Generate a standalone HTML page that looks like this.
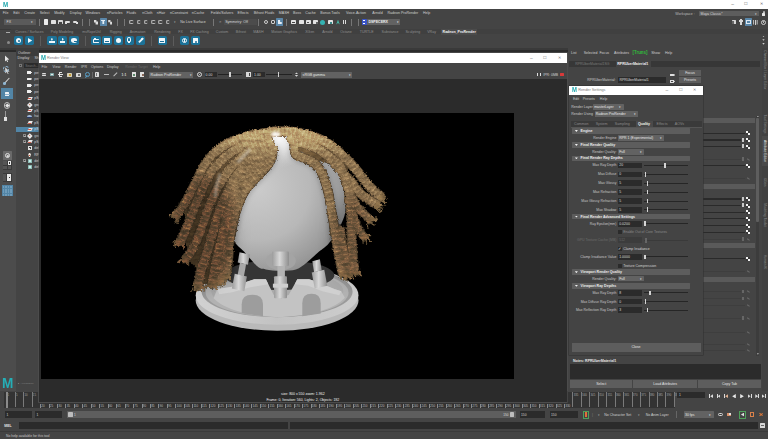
<!DOCTYPE html>
<html><head><meta charset="utf-8"><title>Maya - Render View</title>
<style>
html,body{margin:0;padding:0;background:#444;}
#app{position:relative;width:768px;height:439px;overflow:hidden;background:#444;font-family:"Liberation Sans",sans-serif;}
#app div,#app span,#app svg{position:absolute;}
#app span{white-space:nowrap;line-height:10px;height:10px;}
</style></head><body><div id="app"><div style="left:0.00px;top:0.00px;width:768.00px;height:9.40px;background:#ffffff;"></div><span style="left:2.80px;top:-0.30px;font-size:6.86px;font-weight:bold;color:#22a7ad;transform-origin:0 50%;transform:scaleX(0.9)">M</span><span style="left:732.60px;top:-0.70px;font-size:4.98px;color:#666;transform:translate(-50%,0);">–</span><span style="left:746.40px;top:-0.60px;font-size:4.15px;color:#666;transform:translate(-50%,0);">☐</span><span style="left:761.00px;top:-0.60px;font-size:4.15px;color:#666;transform:translate(-50%,0);">✕</span><div style="left:0.00px;top:9.40px;width:768.00px;height:7.00px;background:#444444;"></div><span style="left:5.50px;top:7.70px;font-size:3.57px;color:#cfcfcf;transform:translate(-50%,0);">File</span><span style="left:16.30px;top:7.70px;font-size:3.57px;color:#cfcfcf;transform:translate(-50%,0);">Edit</span><span style="left:29.60px;top:7.70px;font-size:3.57px;color:#cfcfcf;transform:translate(-50%,0);">Create</span><span style="left:44.60px;top:7.70px;font-size:3.57px;color:#cfcfcf;transform:translate(-50%,0);">Select</span><span style="left:59.40px;top:7.70px;font-size:3.57px;color:#cfcfcf;transform:translate(-50%,0);">Modify</span><span style="left:75.70px;top:7.70px;font-size:3.57px;color:#cfcfcf;transform:translate(-50%,0);">Display</span><span style="left:92.70px;top:7.70px;font-size:3.57px;color:#cfcfcf;transform:translate(-50%,0);">Windows</span><span style="left:114.80px;top:7.70px;font-size:3.57px;color:#cfcfcf;transform:translate(-50%,0);">nParticles</span><span style="left:131.30px;top:7.70px;font-size:3.57px;color:#cfcfcf;transform:translate(-50%,0);">Fluids</span><span style="left:147.40px;top:7.70px;font-size:3.57px;color:#cfcfcf;transform:translate(-50%,0);">nCloth</span><span style="left:161.00px;top:7.70px;font-size:3.57px;color:#cfcfcf;transform:translate(-50%,0);">nHair</span><span style="left:179.00px;top:7.70px;font-size:3.57px;color:#cfcfcf;transform:translate(-50%,0);">nConstraint</span><span style="left:198.00px;top:7.70px;font-size:3.57px;color:#cfcfcf;transform:translate(-50%,0);">nCache</span><span style="left:222.00px;top:7.70px;font-size:3.57px;color:#cfcfcf;transform:translate(-50%,0);">Fields/Solvers</span><span style="left:243.00px;top:7.70px;font-size:3.57px;color:#cfcfcf;transform:translate(-50%,0);">Effects</span><span style="left:264.00px;top:7.70px;font-size:3.57px;color:#cfcfcf;transform:translate(-50%,0);">Bifrost Fluids</span><span style="left:284.00px;top:7.70px;font-size:3.57px;color:#cfcfcf;transform:translate(-50%,0);">MASH</span><span style="left:297.00px;top:7.70px;font-size:3.57px;color:#cfcfcf;transform:translate(-50%,0);">Boss</span><span style="left:310.50px;top:7.70px;font-size:3.57px;color:#cfcfcf;transform:translate(-50%,0);">Cache</span><span style="left:330.00px;top:7.70px;font-size:3.57px;color:#cfcfcf;transform:translate(-50%,0);">Bonus Tools</span><span style="left:356.00px;top:7.70px;font-size:3.57px;color:#cfcfcf;transform:translate(-50%,0);">Voice-Action</span><span style="left:377.50px;top:7.70px;font-size:3.57px;color:#cfcfcf;transform:translate(-50%,0);">Arnold</span><span style="left:402.80px;top:7.70px;font-size:3.57px;color:#cfcfcf;transform:translate(-50%,0);">Radeon ProRender</span><span style="left:426.60px;top:7.70px;font-size:3.57px;color:#cfcfcf;transform:translate(-50%,0);">Help</span><span style="left:685.00px;top:8.60px;font-size:3.49px;color:#bdbdbd;transform:translate(-50%,0);">Workspace :</span><div style="left:698.50px;top:10.80px;width:60.50px;height:5.40px;background:#5d5d5d;border-radius:0.5px"></div><span style="left:700.50px;top:8.60px;font-size:3.49px;color:#d8d8d8;transform:none;">Maya Classic*</span><span style="left:755.50px;top:8.60px;font-size:3.32px;color:#ddd;transform:translate(-50%,0);">▾</span><div style="left:761.80px;top:12.60px;width:3.60px;height:3.40px;background:#e8e8e8;border-radius:0.5px"></div><div style="left:762.50px;top:10.90px;width:2.20px;height:2.60px;background:transparent;border:0.7px solid #e8e8e8;border-radius:1.2px 1.2px 0 0;box-sizing:border-box"></div><div style="left:0.00px;top:16.40px;width:768.00px;height:12.60px;background:#444444;"></div><div style="left:4.20px;top:19.20px;width:31.50px;height:6.00px;background:#5a5a5a;border-radius:0.6px"></div><span style="left:6.50px;top:17.20px;font-size:3.57px;color:#dcdcdc;transform:none;">FX</span><span style="left:32.30px;top:17.20px;font-size:3.49px;color:#e0e0e0;transform:translate(-50%,0);">▾</span><div style="left:39.05px;top:18.60px;width:0.60px;height:7.00px;background:#777;"></div><div style="left:82.45px;top:18.60px;width:0.60px;height:7.00px;background:#777;"></div><div style="left:88.75px;top:18.60px;width:0.60px;height:7.00px;background:#777;"></div><div style="left:117.05px;top:18.60px;width:0.60px;height:7.00px;background:#777;"></div><div style="left:124.35px;top:18.60px;width:0.60px;height:7.00px;background:#777;"></div><div style="left:213.05px;top:18.60px;width:0.60px;height:7.00px;background:#777;"></div><div style="left:258.15px;top:18.60px;width:0.60px;height:7.00px;background:#777;"></div><div style="left:286.45px;top:18.60px;width:0.60px;height:7.00px;background:#777;"></div><div style="left:350.65px;top:18.60px;width:0.60px;height:7.00px;background:#777;"></div><div style="left:358.45px;top:18.60px;width:0.60px;height:7.00px;background:#777;"></div><div style="left:44.10px;top:19.40px;width:3.60px;height:5.20px;background:#ececec;border-radius:0.4px"></div><div style="left:50.90px;top:20.30px;width:5.00px;height:4.00px;background:#e2e2e2;border-radius:0.4px"></div><div style="left:58.10px;top:19.90px;width:4.60px;height:4.60px;background:#d8d8d8;border-radius:0.4px"></div><div style="left:59.20px;top:22.00px;width:2.40px;height:2.40px;background:#444;"></div><div style="left:65.40px;top:21.20px;width:4.60px;height:1.60px;background:#e0e0e0;border-radius:1px"></div><div style="left:65.40px;top:22.10px;width:1.20px;height:2.20px;background:#e0e0e0;"></div><div style="left:72.90px;top:21.20px;width:4.60px;height:1.60px;background:#e0e0e0;border-radius:1px"></div><div style="left:76.40px;top:22.10px;width:1.20px;height:2.20px;background:#e0e0e0;"></div><div style="left:93.90px;top:19.50px;width:4.20px;height:5.00px;background:#dcdcdc;clip-path:polygon(0 0,60% 0,60% 40%,100% 40%,100% 100%,40% 100%,40% 60%,0 60%)"></div><div style="left:99.60px;top:18.40px;width:7.40px;height:7.40px;background:#5a86a8;border-radius:0.5px"></div><div style="left:101.10px;top:19.70px;width:4.40px;height:4.60px;background:#e6eef5;clip-path:polygon(0 0,100% 0,100% 30%,70% 30%,70% 100%,30% 100%,30% 30%,0 30%)"></div><div style="left:108.20px;top:19.50px;width:4.20px;height:5.00px;background:#dcdcdc;clip-path:polygon(0 0,55% 0,55% 45%,100% 45%,100% 100%,45% 100%,45% 55%,0 55%)"></div><div style="left:129.20px;top:19.60px;width:4.80px;height:4.80px;background:transparent;border:0.9px solid #b9b9b9;border-radius:50%;box-sizing:border-box;border-right-color:#555"></div><div style="left:136.60px;top:19.60px;width:4.80px;height:4.80px;background:transparent;border:0.9px solid #b9b9b9;border-radius:50%;box-sizing:border-box;border-right-color:#555"></div><div style="left:143.60px;top:19.60px;width:4.80px;height:4.80px;background:transparent;border:0.9px solid #b9b9b9;border-radius:50%;box-sizing:border-box;border-right-color:#555"></div><div style="left:151.00px;top:19.60px;width:4.80px;height:4.80px;background:transparent;border:0.9px solid #b9b9b9;border-radius:50%;box-sizing:border-box;border-right-color:#555"></div><div style="left:158.00px;top:19.60px;width:4.80px;height:4.80px;background:transparent;border:0.9px solid #b9b9b9;border-radius:50%;box-sizing:border-box;border-right-color:#555"></div><div style="left:165.60px;top:19.60px;width:4.80px;height:4.80px;background:transparent;border:0.9px solid #b9b9b9;border-radius:50%;box-sizing:border-box;border-right-color:#555"></div><span style="left:174.70px;top:17.30px;font-size:2.82px;color:#aaa;transform:translate(-50%,0);">▾</span><span style="left:180.30px;top:17.20px;font-size:3.57px;color:#d4d4d4;transform:none;">No Live Surface</span><span style="left:220.00px;top:17.20px;font-size:2.99px;color:#aaa;transform:translate(-50%,0);">✕</span><div style="left:223.50px;top:19.20px;width:33.00px;height:6.00px;background:#4c4c4c;border-radius:0.5px"></div><span style="left:225.20px;top:17.20px;font-size:3.57px;color:#d8d8d8;transform:none;">Symmetry: Off</span><div style="left:263.80px;top:19.80px;width:4.40px;height:4.40px;background:transparent;border:0.8px solid #cfcfcf;border-radius:50%;box-sizing:border-box"></div><div style="left:270.50px;top:19.80px;width:4.40px;height:4.40px;background:transparent;border:0.8px solid #cfcfcf;border-radius:1px;box-sizing:border-box"></div><div style="left:276.00px;top:18.40px;width:7.40px;height:7.40px;background:#5a86a8;border-radius:0.5px"></div><div style="left:277.60px;top:19.70px;width:4.20px;height:4.60px;background:#e6eef5;clip-path:polygon(0 0,60% 0,60% 50%,100% 50%,100% 100%,0 100%)"></div><div style="left:291.00px;top:20.00px;width:5.00px;height:4.20px;background:#e4e4e4;border-radius:0.4px"></div><div style="left:298.50px;top:20.00px;width:5.00px;height:4.20px;background:#e4e4e4;border-radius:0.4px"></div><div style="left:305.50px;top:20.00px;width:5.00px;height:4.20px;background:#e4e4e4;border-radius:0.4px"></div><div style="left:313.10px;top:20.00px;width:5.00px;height:4.20px;background:#e4e4e4;border-radius:0.4px"></div><div style="left:292.40px;top:21.60px;width:2.20px;height:1.60px;background:#444;"></div><div style="left:306.90px;top:21.60px;width:2.20px;height:1.60px;background:#555;"></div><div style="left:315.60px;top:21.60px;width:2.00px;height:2.00px;background:#666;"></div><div style="left:320.30px;top:19.50px;width:5.00px;height:5.00px;background:#35b3b3;border-radius:50%"></div><div style="left:327.80px;top:20.00px;width:5.00px;height:4.20px;background:#e4e4e4;border-radius:0.4px"></div><div style="left:330.30px;top:21.50px;width:2.00px;height:2.00px;background:#3a8a8a;"></div><div style="left:336.20px;top:19.50px;width:3.60px;height:5.00px;background:#46b5a5;clip-path:polygon(50% 0,100% 100%,50% 70%,0 100%)"></div><div style="left:343.10px;top:19.70px;width:1.00px;height:4.60px;background:#ddd;"></div><div style="left:345.10px;top:19.70px;width:1.00px;height:4.60px;background:#ddd;"></div><div style="left:361.50px;top:18.80px;width:5.40px;height:6.60px;background:#3b55c8;border-radius:0.6px"></div><div style="left:362.90px;top:20.10px;width:2.60px;height:1.00px;background:#fff;"></div><div style="left:362.90px;top:22.90px;width:2.60px;height:1.00px;background:#fff;"></div><div style="left:367.40px;top:19.20px;width:33.00px;height:6.00px;background:#626262;border-radius:0.5px"></div><span style="left:368.40px;top:17.20px;font-size:3.57px;color:#f0f0f0;transform:none;font-weight:bold">DSPECERX</span><span style="left:397.80px;top:17.20px;font-size:3.49px;color:#f0f0f0;transform:translate(-50%,0);">▾</span><div style="left:731.60px;top:19.70px;width:4.60px;height:4.60px;background:#d8d8d8;border-radius:0.5px"></div><div style="left:732.20px;top:20.50px;width:1.40px;height:3.00px;background:#666;"></div><div style="left:740.20px;top:19.30px;width:1.40px;height:5.40px;background:#d8d8d8;"></div><div style="left:739.20px;top:20.40px;width:3.40px;height:1.20px;background:#d8d8d8;"></div><div style="left:744.70px;top:18.40px;width:7.40px;height:7.40px;background:#5a86a8;border-radius:0.5px"></div><div style="left:746.10px;top:20.30px;width:4.60px;height:3.40px;background:#dfe9f2;"></div><div style="left:747.00px;top:21.20px;width:2.80px;height:1.60px;background:#5a86a8;"></div><div style="left:753.20px;top:19.50px;width:4.40px;height:5.00px;background:#cfcfcf;clip-path:polygon(0 0,20% 0,20% 100%,0 100%,0 0,80% 0,100% 0,100% 100%,80% 100%,80% 0)"></div><div style="left:754.95px;top:19.50px;width:0.90px;height:5.00px;background:#cfcfcf;"></div><div style="left:761.00px;top:19.60px;width:5.00px;height:5.00px;background:transparent;border:0.9px solid #cfcfcf;border-radius:50%;box-sizing:border-box"></div><div style="left:762.70px;top:21.30px;width:1.60px;height:1.60px;background:#cfcfcf;border-radius:50%"></div><div style="left:0.00px;top:29.00px;width:768.00px;height:19.40px;background:#444444;"></div><div style="left:0.00px;top:29.00px;width:768.00px;height:0.50px;background:#3a3a3a;"></div><div style="left:10.50px;top:29.40px;width:757.50px;height:5.00px;background:#404040;"></div><span style="left:29.30px;top:26.80px;font-size:3.57px;color:#8f8f8f;transform:translate(-50%,0);">Curves / Surfaces</span><span style="left:62.00px;top:26.80px;font-size:3.57px;color:#8f8f8f;transform:translate(-50%,0);">Poly Modeling</span><span style="left:91.50px;top:26.80px;font-size:3.57px;color:#8f8f8f;transform:translate(-50%,0);">mvRopeUtil</span><span style="left:115.80px;top:26.80px;font-size:3.57px;color:#8f8f8f;transform:translate(-50%,0);">Rigging</span><span style="left:137.60px;top:26.80px;font-size:3.57px;color:#8f8f8f;transform:translate(-50%,0);">Animation</span><span style="left:162.40px;top:26.80px;font-size:3.57px;color:#8f8f8f;transform:translate(-50%,0);">Rendering</span><span style="left:180.50px;top:26.80px;font-size:3.57px;color:#8f8f8f;transform:translate(-50%,0);">FX</span><span style="left:199.50px;top:26.80px;font-size:3.57px;color:#8f8f8f;transform:translate(-50%,0);">FX Caching</span><span style="left:222.00px;top:26.80px;font-size:3.57px;color:#8f8f8f;transform:translate(-50%,0);">Custom</span><span style="left:240.90px;top:26.80px;font-size:3.57px;color:#8f8f8f;transform:translate(-50%,0);">Bifrost</span><span style="left:258.40px;top:26.80px;font-size:3.57px;color:#8f8f8f;transform:translate(-50%,0);">MASH</span><span style="left:284.20px;top:26.80px;font-size:3.57px;color:#8f8f8f;transform:translate(-50%,0);">Motion Graphics</span><span style="left:309.80px;top:26.80px;font-size:3.57px;color:#8f8f8f;transform:translate(-50%,0);">XGen</span><span style="left:327.30px;top:26.80px;font-size:3.57px;color:#8f8f8f;transform:translate(-50%,0);">Arnold</span><span style="left:346.00px;top:26.80px;font-size:3.57px;color:#8f8f8f;transform:translate(-50%,0);">Octane</span><span style="left:366.70px;top:26.80px;font-size:3.57px;color:#8f8f8f;transform:translate(-50%,0);">TURTLE</span><span style="left:390.00px;top:26.80px;font-size:3.57px;color:#8f8f8f;transform:translate(-50%,0);">Substance</span><span style="left:412.80px;top:26.80px;font-size:3.57px;color:#8f8f8f;transform:translate(-50%,0);">Sculpting</span><span style="left:431.60px;top:26.80px;font-size:3.57px;color:#8f8f8f;transform:translate(-50%,0);">VRay</span><div style="left:441.00px;top:29.40px;width:36.00px;height:5.20px;background:#4b4b4b;"></div><span style="left:459.20px;top:26.80px;font-size:3.57px;color:#f2f2f2;transform:translate(-50%,0);font-weight:bold">Radeon_ProRender</span><div style="left:6.40px;top:31.50px;width:3.20px;height:1.00px;background:#aaa;"></div><div style="left:6.50px;top:40.50px;width:3.00px;height:3.00px;background:#8a8a8a;border-radius:50%"></div><div style="left:762.30px;top:35.50px;width:2.40px;height:1.60px;background:#cfcfcf;clip-path:polygon(0 0,100% 0,50% 100%)"></div><div style="left:762.30px;top:39.20px;width:2.40px;height:1.60px;background:#cfcfcf;clip-path:polygon(0 0,100% 0,50% 100%)"></div><div style="left:762.30px;top:43.10px;width:2.40px;height:1.60px;background:#cfcfcf;clip-path:polygon(0 0,100% 0,50% 100%)"></div><div style="left:40.35px;top:36.00px;width:0.60px;height:10.00px;background:#5c5c5c;"></div><div style="left:84.95px;top:36.00px;width:0.60px;height:10.00px;background:#5c5c5c;"></div><div style="left:151.35px;top:36.00px;width:0.60px;height:10.00px;background:#5c5c5c;"></div><div style="left:172.75px;top:36.00px;width:0.60px;height:10.00px;background:#5c5c5c;"></div><div style="left:14.10px;top:35.80px;width:9.40px;height:9.40px;background:#1c7298;border-radius:1.7px"></div><div style="left:16.20px;top:37.90px;width:5.20px;height:5.20px;background:#f2f7fa;border-radius:50%"></div><div style="left:17.80px;top:39.50px;width:2.00px;height:2.00px;background:#1b6f9a;border-radius:50%"></div><div style="left:24.90px;top:35.80px;width:9.40px;height:9.40px;background:#1c7298;border-radius:1.7px"></div><div style="left:27.60px;top:37.70px;width:4.60px;height:5.60px;background:#f2f7fa;clip-path:polygon(0 0,100% 50%,0 100%)"></div><div style="left:47.20px;top:35.80px;width:9.40px;height:9.40px;background:#1c7298;border-radius:1.7px"></div><div style="left:50.70px;top:37.70px;width:2.40px;height:3.00px;background:#f2f7fa;clip-path:polygon(30% 0,70% 0,70% 50%,100% 50%,50% 100%,0 50%,30% 50%)"></div><div style="left:49.10px;top:41.40px;width:5.60px;height:1.80px;background:#f2f7fa;"></div><div style="left:58.00px;top:35.80px;width:9.40px;height:9.40px;background:#1c7298;border-radius:1.7px"></div><div style="left:61.50px;top:37.70px;width:2.40px;height:3.00px;background:#f2f7fa;clip-path:polygon(30% 0,70% 0,70% 50%,100% 50%,50% 100%,0 50%,30% 50%)"></div><div style="left:59.90px;top:41.40px;width:5.60px;height:1.80px;background:#f2f7fa;"></div><div style="left:69.20px;top:35.80px;width:9.40px;height:9.40px;background:#1c7298;border-radius:1.7px"></div><div style="left:71.10px;top:38.00px;width:5.60px;height:4.60px;background:#f2f7fa;border-radius:50% 50% 40% 60%"></div><div style="left:74.40px;top:40.50px;width:2.20px;height:1.00px;background:#1b6f9a;"></div><div style="left:91.30px;top:35.80px;width:9.40px;height:9.40px;background:#1c7298;border-radius:1.7px"></div><div style="left:93.20px;top:39.10px;width:5.60px;height:3.60px;background:#f2f7fa;border-radius:0.4px"></div><div style="left:93.50px;top:38.20px;width:2.60px;height:1.20px;background:#f2f7fa;"></div><div style="left:94.20px;top:40.10px;width:4.40px;height:2.20px;background:#1b6f9a;"></div><div style="left:102.30px;top:35.80px;width:9.40px;height:9.40px;background:#1c7298;border-radius:1.7px"></div><div style="left:104.00px;top:38.20px;width:6.00px;height:4.60px;background:#f2f7fa;border-radius:0.3px"></div><div style="left:104.90px;top:40.50px;width:4.20px;height:1.60px;background:#1b6f9a;"></div><div style="left:113.60px;top:35.80px;width:9.40px;height:9.40px;background:#1c7298;border-radius:1.7px"></div><div style="left:115.80px;top:38.00px;width:5.00px;height:5.00px;background:#f2f7fa;border-radius:50%"></div><div style="left:124.60px;top:35.80px;width:9.40px;height:9.40px;background:#1c7298;border-radius:1.7px"></div><div style="left:127.40px;top:37.40px;width:3.80px;height:4.20px;background:transparent;border:0.9px solid #f2f7fa;border-radius:50% 50% 30% 30%;box-sizing:border-box"></div><div style="left:128.30px;top:42.10px;width:2.00px;height:1.40px;background:#f2f7fa;"></div><div style="left:135.70px;top:35.80px;width:9.40px;height:9.40px;background:#1c7298;border-radius:1.7px"></div><div style="left:139.65px;top:37.30px;width:1.50px;height:6.40px;background:#f2f7fa;transform:rotate(45deg)"></div><div style="left:140.80px;top:37.60px;width:2.60px;height:2.60px;background:#f2f7fa;border-radius:50%"></div><div style="left:157.70px;top:35.80px;width:9.40px;height:9.40px;background:#1c7298;border-radius:1.7px"></div><div style="left:159.40px;top:38.20px;width:6.00px;height:4.60px;background:#f2f7fa;border-radius:0.3px"></div><div style="left:160.30px;top:40.50px;width:4.20px;height:1.60px;background:#1b6f9a;"></div><div style="left:179.80px;top:35.80px;width:9.40px;height:9.40px;background:#1c7298;border-radius:1.7px"></div><div style="left:181.80px;top:37.80px;width:5.40px;height:5.40px;background:transparent;border:1px solid #f2f7fa;border-radius:50%;box-sizing:border-box"></div><div style="left:184.00px;top:39.20px;width:1.00px;height:2.60px;background:#f2f7fa;"></div><div style="left:191.10px;top:35.80px;width:9.40px;height:9.40px;background:#1c7298;border-radius:1.7px"></div><div style="left:193.20px;top:37.70px;width:4.40px;height:5.60px;background:#f2f7fa;border-radius:0.3px"></div><div style="left:195.40px;top:40.60px;width:2.00px;height:2.00px;background:#1b6f9a;border-radius:50%"></div><div style="left:0.00px;top:48.40px;width:768.00px;height:5.00px;background:#3a3a3a;"></div><div style="left:0.00px;top:49.60px;width:768.00px;height:2.00px;background:#2b2b2b;"></div><div style="left:0.00px;top:51.60px;width:15.60px;height:340.00px;background:#4c4c4c;"></div><div style="left:15.60px;top:51.60px;width:0.60px;height:340.00px;background:#383838;"></div><div style="left:4.70px;top:55.20px;width:4.60px;height:7.00px;background:#e6e6e6;clip-path:polygon(0 0,100% 62%,55% 66%,78% 100%,58% 100%,38% 72%,0 92%)"></div><div style="left:5.20px;top:67.30px;width:4.40px;height:6.60px;background:#d6d6d6;clip-path:polygon(0 0,100% 62%,55% 66%,78% 100%,58% 100%,38% 72%,0 92%)"></div><div style="left:3.40px;top:66.20px;width:6.00px;height:6.00px;background:transparent;border:0.7px dashed #8fb4d0;border-radius:50%;box-sizing:border-box"></div><div style="left:6.35px;top:77.00px;width:1.30px;height:8.40px;background:#d8d8d8;transform:rotate(42deg)"></div><div style="left:3.40px;top:82.40px;width:2.40px;height:2.40px;background:#8fb4d0;border-radius:50%"></div><div style="left:1.40px;top:87.70px;width:11.60px;height:11.60px;background:#5285a6;"></div><div style="left:4.70px;top:91.50px;width:4.60px;height:4.20px;background:#eef3f7;border-radius:0.5px"></div><div style="left:5.30px;top:93.50px;width:4.60px;height:1.00px;background:#8fb4d0;"></div><div style="left:4.00px;top:102.40px;width:6.40px;height:6.40px;background:transparent;border:0.8px solid #bdbdbd;border-radius:50%;box-sizing:border-box"></div><div style="left:5.90px;top:104.30px;width:2.60px;height:2.60px;background:#e8e8e8;transform:rotate(45deg)"></div><div style="left:3.50px;top:116.90px;width:3.40px;height:3.80px;background:#e0e0e0;"></div><div style="left:4.90px;top:110.60px;width:0.60px;height:6.00px;background:#999;"></div><span style="left:7.40px;top:142.60px;font-size:2.49px;color:#888;transform:translate(-50%,0);">············</span><div style="left:2.60px;top:150.90px;width:9.40px;height:9.40px;background:#6a6a6a;border-radius:0.5px"></div><div style="left:4.80px;top:153.10px;width:5.00px;height:5.00px;background:transparent;border:0.8px solid #e0e0e0;border-radius:50%;box-sizing:border-box"></div><div style="left:6.50px;top:154.80px;width:1.60px;height:1.60px;background:#e0e0e0;transform:rotate(45deg)"></div><div style="left:2.80px;top:161.00px;width:9.00px;height:8.60px;background:#3a3a3a;"></div><div style="left:3.30px;top:161.30px;width:3.40px;height:3.40px;background:#555;"></div><div style="left:7.90px;top:161.30px;width:3.40px;height:3.40px;background:#e8e8e8;"></div><div style="left:3.30px;top:165.70px;width:3.40px;height:3.40px;background:#555;"></div><div style="left:7.90px;top:165.70px;width:3.40px;height:3.40px;background:#555;"></div><div style="left:8.70px;top:162.10px;width:1.80px;height:1.80px;background:#333;"></div><div style="left:2.80px;top:173.40px;width:9.00px;height:8.80px;background:#3a3a3a;"></div><div style="left:3.20px;top:174.10px;width:2.80px;height:7.40px;background:#555;"></div><div style="left:7.30px;top:174.10px;width:4.20px;height:7.40px;background:#e8e8e8;"></div><div style="left:8.50px;top:176.70px;width:1.80px;height:1.80px;background:#333;"></div><div style="left:1.80px;top:185.40px;width:11.00px;height:11.00px;background:#5285a6;"></div><div style="left:2.80px;top:186.40px;width:1.70px;height:1.70px;background:#6f9cba;"></div><div style="left:2.80px;top:188.90px;width:1.70px;height:1.70px;background:#6f9cba;"></div><div style="left:2.80px;top:191.40px;width:1.70px;height:1.70px;background:#6f9cba;"></div><div style="left:2.80px;top:193.90px;width:1.70px;height:1.70px;background:#6f9cba;"></div><div style="left:5.30px;top:186.40px;width:1.70px;height:1.70px;background:#6f9cba;"></div><div style="left:5.30px;top:188.90px;width:1.70px;height:1.70px;background:#6f9cba;"></div><div style="left:5.30px;top:191.40px;width:1.70px;height:1.70px;background:#6f9cba;"></div><div style="left:5.30px;top:193.90px;width:1.70px;height:1.70px;background:#6f9cba;"></div><div style="left:7.80px;top:186.40px;width:1.70px;height:1.70px;background:#6f9cba;"></div><div style="left:7.80px;top:188.90px;width:1.70px;height:1.70px;background:#6f9cba;"></div><div style="left:7.80px;top:191.40px;width:1.70px;height:1.70px;background:#6f9cba;"></div><div style="left:7.80px;top:193.90px;width:1.70px;height:1.70px;background:#6f9cba;"></div><div style="left:10.30px;top:186.40px;width:1.70px;height:1.70px;background:#6f9cba;"></div><div style="left:10.30px;top:188.90px;width:1.70px;height:1.70px;background:#6f9cba;"></div><div style="left:10.30px;top:191.40px;width:1.70px;height:1.70px;background:#6f9cba;"></div><div style="left:10.30px;top:193.90px;width:1.70px;height:1.70px;background:#6f9cba;"></div><div style="left:16.20px;top:48.40px;width:23.00px;height:343.00px;background:#444444;"></div><div style="left:16.20px;top:48.40px;width:23.00px;height:7.40px;background:#3c3c3c;"></div><span style="left:18.00px;top:47.70px;font-size:3.57px;color:#d4d4d4;transform:none;">Outliner</span><span style="left:17.60px;top:53.40px;font-size:3.57px;color:#cfcfcf;transform:none;">Display</span><span style="left:34.40px;top:53.40px;font-size:3.57px;color:#cfcfcf;transform:none;">Show</span><div style="left:18.60px;top:63.60px;width:3.60px;height:3.80px;background:#3a3a3a;border:0.5px solid #777;box-sizing:border-box"></div><div style="left:24.40px;top:63.20px;width:15.00px;height:5.20px;background:#2b2b2b;"></div><span style="left:25.20px;top:60.90px;font-size:3.32px;color:#777;transform:none;">Search...</span><div style="left:16.30px;top:126.60px;width:23.00px;height:5.60px;background:#5285a6;"></div><div style="left:27.30px;top:71.30px;width:3.40px;height:2.60px;background:#f0f0f0;border-radius:0.3px"></div><div style="left:30.70px;top:71.70px;width:1.40px;height:1.80px;background:#f0f0f0;clip-path:polygon(0 50%,100% 0,100% 100%)"></div><span style="left:34.20px;top:67.60px;font-size:3.49px;color:#d0d0d0;transform:none;">persp</span><div style="left:27.30px;top:77.60px;width:3.40px;height:2.60px;background:#f0f0f0;border-radius:0.3px"></div><div style="left:30.70px;top:78.00px;width:1.40px;height:1.80px;background:#f0f0f0;clip-path:polygon(0 50%,100% 0,100% 100%)"></div><span style="left:34.20px;top:73.90px;font-size:3.49px;color:#d0d0d0;transform:none;">persp</span><div style="left:27.30px;top:84.00px;width:3.40px;height:2.60px;background:#f0f0f0;border-radius:0.3px"></div><div style="left:30.70px;top:84.40px;width:1.40px;height:1.80px;background:#f0f0f0;clip-path:polygon(0 50%,100% 0,100% 100%)"></div><span style="left:34.20px;top:80.30px;font-size:3.49px;color:#d0d0d0;transform:none;">persp</span><div style="left:27.30px;top:90.30px;width:3.40px;height:2.60px;background:#f0f0f0;border-radius:0.3px"></div><div style="left:30.70px;top:90.70px;width:1.40px;height:1.80px;background:#f0f0f0;clip-path:polygon(0 50%,100% 0,100% 100%)"></div><span style="left:34.20px;top:86.60px;font-size:3.49px;color:#d0d0d0;transform:none;">persp</span><div style="left:27.50px;top:96.70px;width:4.20px;height:3.40px;background:#e9e9e9;transform:skewX(-25deg)"></div><div style="left:28.30px;top:98.30px;width:3.40px;height:1.40px;background:#d05848;transform:skewX(-25deg)"></div><span style="left:34.20px;top:93.40px;font-size:3.49px;color:#d0d0d0;transform:none;">pSph</span><div style="left:27.80px;top:102.70px;width:3.60px;height:3.60px;background:#e9e9e9;transform:rotate(45deg)"></div><div style="left:28.90px;top:103.80px;width:1.40px;height:1.40px;background:#c86a50;transform:rotate(45deg)"></div><span style="left:34.20px;top:99.50px;font-size:3.49px;color:#d0d0d0;transform:none;">grou</span><div style="left:27.50px;top:108.80px;width:4.20px;height:3.40px;background:#e9e9e9;transform:skewX(-25deg)"></div><div style="left:28.30px;top:110.40px;width:3.40px;height:1.40px;background:#d05848;transform:skewX(-25deg)"></div><span style="left:34.20px;top:105.50px;font-size:3.49px;color:#d0d0d0;transform:none;">pSph</span><div style="left:27.30px;top:114.50px;width:4.60px;height:3.80px;background:#9fb6d6;border-radius:50% 50% 20% 20%"></div><div style="left:27.40px;top:116.50px;width:4.40px;height:1.20px;background:#2a3a66;"></div><span style="left:34.20px;top:111.30px;font-size:3.49px;color:#d0d0d0;transform:none;">hair</span><div style="left:27.50px;top:120.90px;width:4.20px;height:3.40px;background:#e9e9e9;transform:skewX(-25deg)"></div><div style="left:28.30px;top:122.50px;width:3.40px;height:1.40px;background:#d05848;transform:skewX(-25deg)"></div><span style="left:34.20px;top:117.60px;font-size:3.49px;color:#d0d0d0;transform:none;">pSph</span><div style="left:27.50px;top:127.60px;width:4.20px;height:3.40px;background:#e9e9e9;transform:skewX(-25deg)"></div><div style="left:28.30px;top:129.20px;width:3.40px;height:1.40px;background:#d05848;transform:skewX(-25deg)"></div><span style="left:34.20px;top:124.30px;font-size:3.49px;color:#d0d0d0;transform:none;">pSph</span><div style="left:27.80px;top:134.10px;width:3.60px;height:3.60px;background:#e9e9e9;transform:rotate(45deg)"></div><div style="left:28.90px;top:135.20px;width:1.40px;height:1.40px;background:#c86a50;transform:rotate(45deg)"></div><span style="left:34.20px;top:130.90px;font-size:3.49px;color:#d0d0d0;transform:none;">grou</span><div style="left:27.50px;top:140.20px;width:4.20px;height:3.40px;background:#e9e9e9;transform:skewX(-25deg)"></div><div style="left:28.30px;top:141.80px;width:3.40px;height:1.40px;background:#d05848;transform:skewX(-25deg)"></div><span style="left:34.20px;top:136.90px;font-size:3.49px;color:#d0d0d0;transform:none;">pSph</span><div style="left:27.60px;top:146.40px;width:4.00px;height:4.00px;background:transparent;border:0.7px solid #e0e0e0;box-sizing:border-box"></div><div style="left:28.80px;top:147.60px;width:1.60px;height:1.60px;background:#e0e0e0;"></div><span style="left:34.20px;top:143.40px;font-size:3.49px;color:#d0d0d0;transform:none;">defa</span><div style="left:28.20px;top:152.50px;width:2.80px;height:4.40px;background:#f0e8e0;clip-path:polygon(50% 0,100% 40%,70% 100%,30% 100%,0 40%)"></div><div style="left:29.00px;top:154.50px;width:1.20px;height:1.60px;background:#d0583a;"></div><span style="left:34.20px;top:149.70px;font-size:3.49px;color:#d0d0d0;transform:none;">RPR</span><div style="left:27.60px;top:158.90px;width:4.00px;height:4.00px;background:#8fbdb5;border-radius:0.5px"></div><div style="left:28.60px;top:159.90px;width:2.00px;height:2.00px;background:#dff;border-radius:50%"></div><span style="left:34.20px;top:155.90px;font-size:3.49px;color:#d0d0d0;transform:none;">defa</span><div style="left:27.60px;top:165.20px;width:4.00px;height:4.00px;background:#8fbdb5;border-radius:0.5px"></div><div style="left:28.60px;top:166.20px;width:2.00px;height:2.00px;background:#dff;border-radius:50%"></div><span style="left:34.20px;top:162.20px;font-size:3.49px;color:#d0d0d0;transform:none;">defa</span><div style="left:23.40px;top:134.40px;width:3.00px;height:3.00px;background:transparent;border:0.5px solid #8a8a8a;box-sizing:border-box"></div><div style="left:24.10px;top:135.65px;width:1.60px;height:0.50px;background:#aaa;"></div><div style="left:23.40px;top:140.40px;width:3.00px;height:3.00px;background:transparent;border:0.5px solid #8a8a8a;box-sizing:border-box"></div><div style="left:24.10px;top:141.65px;width:1.60px;height:0.50px;background:#aaa;"></div><div style="left:23.40px;top:159.40px;width:3.00px;height:3.00px;background:transparent;border:0.5px solid #8a8a8a;box-sizing:border-box"></div><div style="left:24.10px;top:160.65px;width:1.60px;height:0.50px;background:#aaa;"></div><div style="left:38.60px;top:53.30px;width:528.60px;height:349.20px;background:#2b2b2b;box-shadow:0 0 0 0.5px #555"></div><div style="left:38.60px;top:53.30px;width:528.60px;height:9.30px;background:#ffffff;"></div><span style="left:40.80px;top:52.90px;font-size:6.58px;font-weight:bold;color:#22a7ad;transform-origin:0 50%;transform:scaleX(0.9)">M</span><span style="left:46.90px;top:53.10px;font-size:3.82px;color:#7d7d7d;transform:none;">Render View</span><span style="left:531.40px;top:52.60px;font-size:4.98px;color:#777;transform:translate(-50%,0);">–</span><span style="left:545.00px;top:52.90px;font-size:4.15px;color:#777;transform:translate(-50%,0);">☐</span><span style="left:559.40px;top:52.90px;font-size:4.15px;color:#777;transform:translate(-50%,0);">✕</span><div style="left:38.60px;top:62.60px;width:528.60px;height:16.40px;background:#444444;"></div><span style="left:44.40px;top:61.90px;font-size:3.57px;color:#c8c8c8;transform:translate(-50%,0);">File</span><span style="left:56.40px;top:61.90px;font-size:3.57px;color:#c8c8c8;transform:translate(-50%,0);">View</span><span style="left:70.70px;top:61.90px;font-size:3.57px;color:#c8c8c8;transform:translate(-50%,0);">Render</span><span style="left:84.00px;top:61.90px;font-size:3.57px;color:#c8c8c8;transform:translate(-50%,0);">IPR</span><span style="left:97.20px;top:61.90px;font-size:3.57px;color:#c8c8c8;transform:translate(-50%,0);">Options</span><span style="left:112.80px;top:61.90px;font-size:3.57px;color:#c8c8c8;transform:translate(-50%,0);">Display</span><span style="left:136.60px;top:61.90px;font-size:3.57px;color:#6a6a6a;transform:translate(-50%,0);">Render Target</span><span style="left:156.60px;top:61.90px;font-size:3.57px;color:#c8c8c8;transform:translate(-50%,0);">Help</span><div style="left:41.50px;top:72.80px;width:4.80px;height:3.60px;background:#dedede;border-radius:0.4px"></div><div style="left:41.50px;top:74.00px;width:4.80px;height:0.80px;background:#777;"></div><div style="left:49.70px;top:72.70px;width:4.80px;height:3.80px;background:#7fa7a7;border-radius:0.4px"></div><div style="left:50.90px;top:73.80px;width:2.40px;height:1.60px;background:#e8e8e8;"></div><div style="left:58.90px;top:72.20px;width:3.60px;height:4.80px;background:#e0e0e0;"></div><div style="left:59.70px;top:73.30px;width:2.00px;height:2.60px;background:#444;"></div><div style="left:58.20px;top:74.10px;width:5.00px;height:1.00px;background:#e0e0e0;"></div><div style="left:66.90px;top:72.60px;width:5.00px;height:4.00px;background:#d8d0b8;border-radius:0.4px"></div><div style="left:68.80px;top:74.20px;width:2.40px;height:1.60px;background:#c9a23a;"></div><div style="left:76.40px;top:72.50px;width:5.00px;height:4.20px;background:#d6d6d6;border-radius:0.4px"></div><div style="left:77.70px;top:73.80px;width:2.40px;height:2.20px;background:#6f6f6f;"></div><div style="left:85.30px;top:72.20px;width:4.80px;height:4.80px;background:transparent;border:0.8px solid #5aa0c8;border-radius:50%;box-sizing:border-box"></div><div style="left:86.10px;top:74.90px;width:1.00px;height:2.60px;background:#5aa0c8;transform:rotate(40deg)"></div><div style="left:94.90px;top:72.30px;width:4.60px;height:4.60px;background:#dadada;border-radius:0.4px"></div><div style="left:95.60px;top:73.20px;width:1.60px;height:2.80px;background:#777;"></div><div style="left:92.25px;top:71.60px;width:0.60px;height:6.00px;background:#666;"></div><div style="left:104.10px;top:73.80px;width:4.80px;height:1.60px;background:#bdbdbd;"></div><div style="left:114.80px;top:72.30px;width:1.00px;height:4.60px;background:#bdbdbd;transform:rotate(45deg)"></div><span style="left:124.00px;top:69.60px;font-size:3.32px;color:#d8d8d8;transform:translate(-50%,0);font-weight:bold">1:1</span><div style="left:132.00px;top:72.10px;width:4.00px;height:5.00px;background:#e0e0e0;border-radius:0.3px"></div><div style="left:133.00px;top:74.00px;width:2.00px;height:2.40px;background:#5a8a6a;"></div><div style="left:140.00px;top:72.10px;width:4.00px;height:5.00px;background:#e0e0e0;border-radius:0.3px"></div><div style="left:141.60px;top:74.40px;width:2.00px;height:2.00px;background:#8a6a5a;"></div><div style="left:149.00px;top:71.60px;width:44.40px;height:6.00px;background:#626262;border-radius:0.5px"></div><span style="left:150.60px;top:69.60px;font-size:3.57px;color:#e8e8e8;transform:none;">Radeon ProRender</span><span style="left:190.60px;top:69.60px;font-size:3.49px;color:#e8e8e8;transform:translate(-50%,0);">▾</span><div style="left:197.00px;top:72.10px;width:5.00px;height:5.00px;background:transparent;border:1px solid #d8d8d8;border-radius:50%;box-sizing:border-box"></div><div style="left:198.70px;top:73.80px;width:1.60px;height:1.60px;background:#d8d8d8;border-radius:50%"></div><div style="left:204.50px;top:71.80px;width:12.20px;height:5.60px;background:#2b2b2b;"></div><span style="left:205.60px;top:69.60px;font-size:3.49px;color:#d8d8d8;transform:none;">0.00</span><div style="left:218.30px;top:74.25px;width:24.00px;height:0.90px;background:#222;"></div><div style="left:229.10px;top:72.30px;width:1.80px;height:4.60px;background:#d0d0d0;"></div><div style="left:246.40px;top:72.20px;width:4.60px;height:4.80px;background:transparent;border:0.9px solid #d8d8d8;box-sizing:border-box"></div><div style="left:246.60px;top:72.20px;width:2.00px;height:4.80px;background:#d8d8d8;"></div><div style="left:252.90px;top:71.80px;width:12.00px;height:5.60px;background:#2b2b2b;"></div><span style="left:254.00px;top:69.60px;font-size:3.49px;color:#d8d8d8;transform:none;">1.00</span><div style="left:266.40px;top:74.25px;width:26.00px;height:0.90px;background:#222;"></div><div style="left:277.60px;top:72.30px;width:1.80px;height:4.60px;background:#d0d0d0;"></div><div style="left:294.80px;top:72.40px;width:3.40px;height:1.80px;background:#d8d8d8;clip-path:polygon(50% 0,100% 100%,0 100%)"></div><div style="left:294.80px;top:75.00px;width:3.40px;height:1.80px;background:#d8d8d8;clip-path:polygon(0 0,100% 0,50% 100%)"></div><div style="left:301.00px;top:71.60px;width:51.40px;height:6.00px;background:#626262;border-radius:0.5px"></div><span style="left:302.60px;top:69.60px;font-size:3.57px;color:#e8e8e8;transform:none;">sRGB gamma</span><span style="left:349.50px;top:69.60px;font-size:3.49px;color:#e8e8e8;transform:translate(-50%,0);">▾</span><div style="left:537.45px;top:72.80px;width:0.90px;height:3.60px;background:#e0e0e0;"></div><div style="left:539.55px;top:72.80px;width:0.90px;height:3.60px;background:#e0e0e0;"></div><span style="left:550.70px;top:69.60px;font-size:3.49px;color:#d0d0d0;transform:translate(-50%,0);">IPR: 0MB</span><div style="left:560.20px;top:72.80px;width:3.60px;height:3.60px;background:#d83a3a;border-radius:0.5px"></div><svg style="left:40.7px;top:112.8px" width="473.6" height="266.7" viewBox="40.7 112.8 473.6 266.7"><defs>
<filter id="fz" x="-5%" y="-5%" width="110%" height="110%" color-interpolation-filters="sRGB"><feTurbulence type="fractalNoise" baseFrequency="0.55" numOctaves="2" seed="4" result="n"/><feDisplacementMap in="SourceGraphic" in2="n" scale="3.2" xChannelSelector="R" yChannelSelector="G" result="d"/><feTurbulence type="fractalNoise" baseFrequency="0.16 0.3" numOctaves="3" seed="11" result="n2"/><feColorMatrix in="n2" type="matrix" values="0.6 0.6 0 0 -0.1  0.6 0.6 0 0 -0.1  0.6 0.6 0 0 -0.1  0 0 0 0 1" result="n3"/><feComposite in="d" in2="n3" operator="arithmetic" k1="0.7" k2="0.62" k3="0" k4="0" result="m"/><feComposite in="m" in2="d" operator="in"/><feGaussianBlur stdDeviation="0.5"/></filter>
<radialGradient id="sph" gradientUnits="userSpaceOnUse" cx="258" cy="188" r="104"><stop offset="0" stop-color="#cbcbcb"/><stop offset="0.5" stop-color="#b8b8b8"/><stop offset="0.8" stop-color="#9a9a9a"/><stop offset="1" stop-color="#828282"/></radialGradient>
<radialGradient id="hl" gradientUnits="userSpaceOnUse" cx="279" cy="138" r="30"><stop offset="0" stop-color="#ffffff" stop-opacity="0.85"/><stop offset="0.5" stop-color="#f0f0f0" stop-opacity="0.45"/><stop offset="1" stop-color="#e0e0e0" stop-opacity="0"/></radialGradient>
<linearGradient id="disc" x1="0" x2="1"><stop offset="0" stop-color="#d2d2d2"/><stop offset="0.5" stop-color="#c2c2c2"/><stop offset="1" stop-color="#cdcdcd"/></linearGradient>
<linearGradient id="pist" x1="0" x2="1"><stop offset="0" stop-color="#9c9c9c"/><stop offset="0.45" stop-color="#d8d8d8"/><stop offset="1" stop-color="#8e8e8e"/></linearGradient>
<filter id="blur8" x="-30%" y="-30%" width="160%" height="160%"><feGaussianBlur stdDeviation="7"/></filter><filter id="blur1"><feGaussianBlur stdDeviation="1"/></filter><filter id="blur2" x="-20%" y="-20%" width="140%" height="140%"><feGaussianBlur stdDeviation="2.2"/></filter><filter id="soft"><feGaussianBlur stdDeviation="0.5"/></filter>
</defs><rect x="40.7" y="112.8" width="473.6" height="266.7" fill="#000"/><g filter="url(#soft)"><ellipse cx="276.8" cy="300.2" rx="81.4" ry="30.4" fill="#b9b9b9"/><ellipse cx="276.8" cy="295" rx="81.4" ry="29.6" fill="url(#disc)"/><ellipse cx="276.8" cy="291.5" rx="75.5" ry="25.5" fill="#9b9b9b"/><ellipse cx="276.8" cy="292.5" rx="71.5" ry="24" fill="#b2b2b2"/><ellipse cx="277" cy="291" rx="66" ry="21.5" fill="#aaaaaa"/><ellipse cx="279" cy="275" rx="55" ry="15" fill="#363636"/><clipPath id="spc"><path d="M278.0 134.0 C283.3 135.3 300.5 136.8 310.0 142.0 C319.5 147.2 329.1 154.8 335.0 165.0 C340.9 175.2 344.7 192.8 345.5 203.0 C346.3 213.2 342.9 219.3 340.0 226.0 C337.1 232.7 331.9 239.0 328.4 243.2 C324.9 247.4 322.4 248.2 318.8 251.4 C315.2 254.6 310.4 259.3 306.5 262.3 C302.6 265.3 300.0 267.8 295.6 269.2 C291.2 270.6 285.0 270.5 280.0 270.5 C275.0 270.5 269.3 269.9 265.5 269.2 C261.7 268.5 260.9 269.4 257.3 266.4 C253.7 263.4 247.6 255.5 243.7 251.4 C239.8 247.3 237.6 246.2 234.0 241.8 C230.4 237.4 225.3 231.5 222.0 225.0 C218.7 218.5 214.0 212.5 214.0 203.0 C214.0 193.5 216.7 178.2 222.0 168.0 C227.3 157.8 236.7 147.7 246.0 142.0 C255.3 136.3 272.7 135.3 278.0 134.0 Z"/></clipPath><path d="M278.0 134.0 C283.3 135.3 300.5 136.8 310.0 142.0 C319.5 147.2 329.1 154.8 335.0 165.0 C340.9 175.2 344.7 192.8 345.5 203.0 C346.3 213.2 342.9 219.3 340.0 226.0 C337.1 232.7 331.9 239.0 328.4 243.2 C324.9 247.4 322.4 248.2 318.8 251.4 C315.2 254.6 310.4 259.3 306.5 262.3 C302.6 265.3 300.0 267.8 295.6 269.2 C291.2 270.6 285.0 270.5 280.0 270.5 C275.0 270.5 269.3 269.9 265.5 269.2 C261.7 268.5 260.9 269.4 257.3 266.4 C253.7 263.4 247.6 255.5 243.7 251.4 C239.8 247.3 237.6 246.2 234.0 241.8 C230.4 237.4 225.3 231.5 222.0 225.0 C218.7 218.5 214.0 212.5 214.0 203.0 C214.0 193.5 216.7 178.2 222.0 168.0 C227.3 157.8 236.7 147.7 246.0 142.0 C255.3 136.3 272.7 135.3 278.0 134.0 Z" fill="url(#sph)"/><ellipse cx="280.5" cy="260.5" rx="15" ry="9.5" fill="#a4a4a4"/><circle cx="279" cy="138" r="30" fill="url(#hl)" clip-path="url(#spc)"/><path d="M213.3 298 L217 288.8 L230.7 286.8 L248 281 L254 279 L265.6 279 L273.3 294.6 L281 298.4 L288.5 294.6 L297 279 L308.8 279 L315 281 L334 288.8 L341 291 L344.6 297.5 Q330 314 279 317 Q228 314 213.3 298 Z" fill="#c3c3c3"/><path d="M217 288.8 L230.7 286.8 L248 281 L254 279 L265.6 279 L268 284 L250 287 L232 292 L219 294 Z" fill="#d0d0d0"/><path d="M297 279 L308.8 279 L315 281 L334 288.8 L341 291 L339 295 L322 291 L308 285.5 L294.5 284 Z" fill="#d0d0d0"/><path d="M241.4 313 L241.4 304 Q241.4 294.6 252 294.6 Q262.7 294.6 262.7 304 L262.7 316 Z" fill="#9d9d9d"/><path d="M302 316 L302 303 Q302 293.6 311.2 293.6 Q320.4 293.6 320.4 303 L320.4 313.4 Z" fill="#9d9d9d"/><path d="M239.2 252 L249.6 254.4 L247.6 264.6 L237.4 262.4 Z" fill="url(#pist)"/><path d="M239.6 262.6 L245.8 264 L243.6 276 L237.4 274.6 Z" fill="#a9a9a9"/><path d="M234.4 273.6 L246.6 276.2 L244 291 L231.6 288.4 Z" fill="url(#pist)"/><path d="M312 261 L319.6 259 L321.4 270 L313.8 272 Z" fill="url(#pist)"/><path d="M311.4 272.4 L324 269.6 L327 285.6 L314.4 288.4 Z" fill="url(#pist)"/><rect x="277.1" y="262" width="7.5" height="16" fill="#b4b4b4"/><rect x="271.7" y="251.4" width="17" height="14.3" rx="1.2" fill="url(#pist)"/><rect x="273.7" y="276" width="13" height="22" rx="1" fill="url(#pist)"/><rect x="272.6" y="283.5" width="15.2" height="4" fill="#cfcfcf"/></g><g filter="url(#blur2)" fill="none" stroke="#000" stroke-opacity="0.16" stroke-width="12" stroke-linecap="round"><path d="M273.3 149.0 C273.1 150.5 272.9 155.3 272.0 158.0 C271.1 160.7 269.6 162.8 268.0 165.0 C266.4 167.2 264.4 169.4 262.5 171.5 C260.6 173.6 258.5 175.4 256.5 177.5 C254.5 179.6 252.4 181.8 250.5 184.0 C248.6 186.2 246.6 188.5 245.0 191.0 C243.4 193.5 241.9 196.3 240.7 199.0 C239.5 201.7 238.8 204.3 237.8 207.0 C236.9 209.7 236.1 210.8 235.0 215.0 C233.9 219.2 232.4 227.3 231.5 232.0 C230.6 236.7 230.2 238.3 229.7 243.0 C229.2 247.7 229.0 254.7 228.5 260.0 C228.0 265.3 226.8 272.5 226.5 275.0"/><path d="M294.0 147.0 C294.2 148.1 294.1 151.9 295.0 153.5 C295.9 155.1 297.5 155.6 299.5 156.5 C301.5 157.4 304.6 157.9 307.0 159.0 C309.4 160.1 311.8 161.2 314.0 163.0 C316.2 164.8 318.3 167.4 320.0 170.0 C321.7 172.6 322.7 175.0 324.0 178.7 C325.3 182.4 326.9 187.8 328.0 192.3 C329.1 196.9 329.6 201.4 330.4 206.0 C331.2 210.6 332.0 214.9 332.8 219.7 C333.6 224.5 334.1 229.4 335.0 235.0 C335.9 240.6 336.8 246.8 338.0 253.0 C339.2 259.2 341.3 268.8 342.0 272.0"/></g><g filter="url(#fz)" stroke-linecap="round" stroke-linejoin="round" fill="none"><path d="M270 129 L245 133 L226 141 L210 154.5 L198 172 L188 192 L181 206 L185 217 L181 232 L187 248 L187 259 L196 268 L197 281 L200 285 L213 282 L225 274 L230 262 L232 243 L235 231 L238.6 213 L241.3 205 L244 198 L248 189 L253 181 L259 175 L265 169 L270 163 L273 157 L273.5 150 L272 143 L269 138.5 Z" fill="#6a5335" stroke="none"/><path d="M292 133 L305 131 L322 138 L338 149 L352 162 L346 172 L337 168 L327 163 L316 160 L304 153 L294 148 Z" fill="#6a5335" stroke="none"/><path d="M288.0 131.5 C283.7 131.8 269.5 132.1 262.0 133.0 C254.5 133.9 248.7 135.3 243.0 137.0 C237.3 138.7 232.8 140.4 228.0 143.0 C223.2 145.6 218.4 148.9 214.5 152.5 C210.6 156.1 207.5 159.9 204.5 164.5 C201.5 169.1 199.2 174.8 196.5 180.0 C193.8 185.2 191.1 191.2 188.5 196.0 C185.9 200.8 183.1 205.9 181.0 209.0 C178.9 212.1 176.8 213.6 176.0 214.5" stroke="#594730" stroke-width="10"/><path d="M266.5 136.5 C264.4 137.1 258.2 138.4 254.0 140.0 C249.8 141.6 245.7 143.3 241.0 146.0 C236.3 148.7 230.7 152.2 226.0 156.0 C221.3 159.8 216.7 164.2 213.0 169.0 C209.3 173.8 206.8 179.3 204.0 185.0 C201.2 190.7 198.5 197.0 196.0 203.0 C193.5 209.0 191.2 215.5 189.0 221.0 C186.8 226.5 184.5 232.7 183.0 236.0 C181.5 239.3 180.5 240.2 180.0 241.0" stroke="#594730" stroke-width="10.5"/><path d="M267.5 139.5 C265.8 140.4 260.8 142.6 257.0 145.0 C253.2 147.4 249.3 150.3 245.0 154.0 C240.7 157.7 235.2 162.2 231.0 167.0 C226.8 171.8 223.3 177.3 220.0 183.0 C216.7 188.7 213.7 194.8 211.0 201.0 C208.3 207.2 206.3 213.7 204.0 220.0 C201.7 226.3 199.2 233.7 197.0 239.0 C194.8 244.3 192.3 248.8 190.5 252.0 C188.7 255.2 186.8 257.0 186.0 258.0" stroke="#594730" stroke-width="10.5"/><path d="M269.0 143.0 C267.5 144.2 263.3 147.2 260.0 150.0 C256.7 152.8 252.8 155.8 249.0 160.0 C245.2 164.2 240.7 169.7 237.0 175.0 C233.3 180.3 230.0 186.0 227.0 192.0 C224.0 198.0 221.3 204.5 219.0 211.0 C216.7 217.5 215.0 224.3 213.0 231.0 C211.0 237.7 209.0 244.5 207.0 251.0 C205.0 257.5 202.5 264.3 201.0 270.0 C199.5 275.7 198.5 282.5 198.0 285.0" stroke="#594730" stroke-width="11"/><path d="M270.5 146.5 C269.1 147.8 264.9 150.9 262.0 154.0 C259.1 157.1 256.3 160.5 253.0 165.0 C249.7 169.5 245.3 175.3 242.0 181.0 C238.7 186.7 235.7 192.7 233.0 199.0 C230.3 205.3 228.0 212.2 226.0 219.0 C224.0 225.8 222.7 233.0 221.0 240.0 C219.3 247.0 217.5 253.8 216.0 261.0 C214.5 268.2 212.7 279.3 212.0 283.0" stroke="#594730" stroke-width="11"/><path d="M272.0 150.0 C270.8 151.2 267.7 154.0 265.0 157.0 C262.3 160.0 259.2 163.5 256.0 168.0 C252.8 172.5 249.2 178.2 246.0 184.0 C242.8 189.8 239.5 196.3 237.0 203.0 C234.5 209.7 232.7 216.8 231.0 224.0 C229.3 231.2 228.3 239.0 227.0 246.0 C225.7 253.0 224.2 260.3 223.0 266.0 C221.8 271.7 220.5 277.7 220.0 280.0" stroke="#594730" stroke-width="10.5"/><path d="M273.3 149.0 C273.1 150.5 272.9 155.3 272.0 158.0 C271.1 160.7 269.6 162.8 268.0 165.0 C266.4 167.2 264.4 169.4 262.5 171.5 C260.6 173.6 258.5 175.4 256.5 177.5 C254.5 179.6 252.4 181.8 250.5 184.0 C248.6 186.2 246.6 188.5 245.0 191.0 C243.4 193.5 241.9 196.3 240.7 199.0 C239.5 201.7 238.8 204.3 237.8 207.0 C236.9 209.7 236.1 210.8 235.0 215.0 C233.9 219.2 232.4 227.3 231.5 232.0 C230.6 236.7 230.2 238.3 229.7 243.0 C229.2 247.7 229.0 254.7 228.5 260.0 C228.0 265.3 226.8 272.5 226.5 275.0" stroke="#594730" stroke-width="9"/><path d="M270.0 131.5 C273.7 131.5 285.3 130.8 292.0 131.5 C298.7 132.2 304.2 133.6 310.0 135.5 C315.8 137.4 321.5 139.6 327.0 143.0 C332.5 146.4 338.0 151.3 343.0 156.0 C348.0 160.7 352.7 166.0 357.0 171.0 C361.3 176.0 365.2 181.8 369.0 186.0 C372.8 190.2 378.2 194.3 380.0 196.0" stroke="#594730" stroke-width="10.5"/><path d="M290.0 137.5 C291.8 137.9 297.0 138.6 301.0 140.0 C305.0 141.4 309.5 143.2 314.0 146.0 C318.5 148.8 323.5 152.9 328.0 157.0 C332.5 161.1 337.0 166.4 341.0 170.7 C345.0 175.0 348.6 179.0 352.0 183.0 C355.4 187.0 357.4 191.1 361.4 194.6 C365.4 198.1 373.6 202.4 376.0 204.0" stroke="#594730" stroke-width="10"/><path d="M340.0 168.0 C341.2 171.0 344.5 180.2 347.0 186.0 C349.5 191.8 352.5 198.7 355.0 203.0 C357.5 207.3 359.7 209.4 362.0 212.0 C364.3 214.6 367.8 217.4 369.0 218.5" stroke="#594730" stroke-width="9"/><path d="M348.0 200.0 C348.8 202.5 351.3 210.3 353.0 215.0 C354.7 219.7 356.3 224.5 358.0 228.0 C359.7 231.5 362.2 234.7 363.0 236.0" stroke="#594730" stroke-width="9"/><path d="M292.5 142.0 C294.4 142.2 299.8 142.3 304.0 143.5 C308.2 144.7 313.7 146.8 318.0 149.0 C322.3 151.2 326.4 154.2 330.0 157.0 C333.6 159.8 337.0 161.9 339.5 165.5 C342.0 169.1 343.4 174.2 345.0 178.7 C346.6 183.2 347.9 187.8 348.8 192.3 C349.7 196.9 349.8 201.1 350.2 206.0 C350.6 210.9 350.8 216.3 351.0 222.0 C351.2 227.7 351.2 234.3 351.5 240.0 C351.8 245.7 352.1 250.8 352.5 256.0 C352.9 261.2 353.8 268.5 354.0 271.0" stroke="#594730" stroke-width="10.5"/><path d="M340.0 230.0 C340.3 232.5 341.1 240.0 342.0 245.0 C342.9 250.0 344.5 255.3 345.5 260.0 C346.5 264.7 347.6 270.8 348.0 273.0" stroke="#594730" stroke-width="10"/><path d="M294.0 147.0 C294.2 148.1 294.1 151.9 295.0 153.5 C295.9 155.1 297.5 155.6 299.5 156.5 C301.5 157.4 304.6 157.9 307.0 159.0 C309.4 160.1 311.8 161.2 314.0 163.0 C316.2 164.8 318.3 167.4 320.0 170.0 C321.7 172.6 322.7 175.0 324.0 178.7 C325.3 182.4 326.9 187.8 328.0 192.3 C329.1 196.9 329.6 201.4 330.4 206.0 C331.2 210.6 332.0 214.9 332.8 219.7 C333.6 224.5 334.1 229.4 335.0 235.0 C335.9 240.6 336.8 246.8 338.0 253.0 C339.2 259.2 341.3 268.8 342.0 272.0" stroke="#594730" stroke-width="10"/><path d="M288.0 131.5 C283.7 131.8 269.5 132.1 262.0 133.0 C254.5 133.9 248.7 135.3 243.0 137.0 C237.3 138.7 232.8 140.4 228.0 143.0 C223.2 145.6 218.4 148.9 214.5 152.5 C210.6 156.1 207.5 159.9 204.5 164.5 C201.5 169.1 199.2 174.8 196.5 180.0 C193.8 185.2 191.1 191.2 188.5 196.0 C185.9 200.8 183.1 205.9 181.0 209.0 C178.9 212.1 176.8 213.6 176.0 214.5" stroke="#8e7350" stroke-width="8"/><path d="M288.0 131.5 C283.7 131.8 269.5 132.1 262.0 133.0 C254.5 133.9 248.7 135.3 243.0 137.0 C237.3 138.7 232.8 140.4 228.0 143.0 C223.2 145.6 218.4 148.9 214.5 152.5 C210.6 156.1 207.5 159.9 204.5 164.5 C201.5 169.1 199.2 174.8 196.5 180.0 C193.8 185.2 191.1 191.2 188.5 196.0 C185.9 200.8 183.1 205.9 181.0 209.0 C178.9 212.1 176.8 213.6 176.0 214.5" stroke="#a3875f" stroke-width="6.5" stroke-dasharray="1.8 2.2" stroke-linecap="butt"/><path d="M288.0 131.5 C283.7 131.8 269.5 132.1 262.0 133.0 C254.5 133.9 248.7 135.3 243.0 137.0 C237.3 138.7 232.8 140.4 228.0 143.0 C223.2 145.6 218.4 148.9 214.5 152.5 C210.6 156.1 207.5 159.9 204.5 164.5 C201.5 169.1 199.2 174.8 196.5 180.0 C193.8 185.2 191.1 191.2 188.5 196.0 C185.9 200.8 183.1 205.9 181.0 209.0 C178.9 212.1 176.8 213.6 176.0 214.5" stroke="#70583a" stroke-width="9" stroke-dasharray="0.7 3.3" stroke-dashoffset="2.6" stroke-linecap="butt" opacity="0.6"/><path d="M175.1 213.7 L173.1 217.4" stroke="#93774f" stroke-width="1.3"/><path d="M176.8 215.3 L176.0 221.4" stroke="#93774f" stroke-width="1.3"/><path d="M178.9 217.1 L178.1 223.1" stroke="#93774f" stroke-width="1.3"/><path d="M178.5 216.8 L176.2 219.9" stroke="#93774f" stroke-width="1.3"/><path d="M178.3 216.6 L173.8 222.8" stroke="#93774f" stroke-width="1.3"/><path d="M173.2 212.0 L171.0 218.2" stroke="#93774f" stroke-width="1.3"/><path d="M173.1 211.8 L169.0 215.5" stroke="#93774f" stroke-width="1.3"/><path d="M177.3 215.7 L176.5 223.4" stroke="#93774f" stroke-width="1.3"/><path d="M177.2 215.6 L176.2 219.5" stroke="#93774f" stroke-width="1.3"/><path d="M175.5 214.0 L171.4 215.7" stroke="#93774f" stroke-width="1.3"/><path d="M175.7 214.2 L171.4 217.4" stroke="#93774f" stroke-width="1.3"/><path d="M177.8 216.1 L177.3 219.9" stroke="#93774f" stroke-width="1.3"/><path d="M266.5 136.5 C264.4 137.1 258.2 138.4 254.0 140.0 C249.8 141.6 245.7 143.3 241.0 146.0 C236.3 148.7 230.7 152.2 226.0 156.0 C221.3 159.8 216.7 164.2 213.0 169.0 C209.3 173.8 206.8 179.3 204.0 185.0 C201.2 190.7 198.5 197.0 196.0 203.0 C193.5 209.0 191.2 215.5 189.0 221.0 C186.8 226.5 184.5 232.7 183.0 236.0 C181.5 239.3 180.5 240.2 180.0 241.0" stroke="#8e7350" stroke-width="8.5"/><path d="M266.5 136.5 C264.4 137.1 258.2 138.4 254.0 140.0 C249.8 141.6 245.7 143.3 241.0 146.0 C236.3 148.7 230.7 152.2 226.0 156.0 C221.3 159.8 216.7 164.2 213.0 169.0 C209.3 173.8 206.8 179.3 204.0 185.0 C201.2 190.7 198.5 197.0 196.0 203.0 C193.5 209.0 191.2 215.5 189.0 221.0 C186.8 226.5 184.5 232.7 183.0 236.0 C181.5 239.3 180.5 240.2 180.0 241.0" stroke="#a3875f" stroke-width="7.0" stroke-dasharray="1.8 2.2" stroke-linecap="butt"/><path d="M266.5 136.5 C264.4 137.1 258.2 138.4 254.0 140.0 C249.8 141.6 245.7 143.3 241.0 146.0 C236.3 148.7 230.7 152.2 226.0 156.0 C221.3 159.8 216.7 164.2 213.0 169.0 C209.3 173.8 206.8 179.3 204.0 185.0 C201.2 190.7 198.5 197.0 196.0 203.0 C193.5 209.0 191.2 215.5 189.0 221.0 C186.8 226.5 184.5 232.7 183.0 236.0 C181.5 239.3 180.5 240.2 180.0 241.0" stroke="#70583a" stroke-width="9.5" stroke-dasharray="0.7 3.3" stroke-dashoffset="2.6" stroke-linecap="butt" opacity="0.6"/><path d="M181.4 241.8 L177.4 245.8" stroke="#93774f" stroke-width="1.3"/><path d="M181.5 241.9 L178.0 246.5" stroke="#93774f" stroke-width="1.3"/><path d="M181.9 242.2 L176.2 246.2" stroke="#93774f" stroke-width="1.3"/><path d="M177.2 239.3 L173.5 244.2" stroke="#93774f" stroke-width="1.3"/><path d="M176.4 238.8 L172.6 242.1" stroke="#93774f" stroke-width="1.3"/><path d="M178.1 239.8 L178.0 245.4" stroke="#93774f" stroke-width="1.3"/><path d="M183.5 243.1 L183.1 249.0" stroke="#93774f" stroke-width="1.3"/><path d="M179.5 240.7 L174.3 245.9" stroke="#93774f" stroke-width="1.3"/><path d="M178.5 240.1 L174.1 242.6" stroke="#93774f" stroke-width="1.3"/><path d="M180.3 241.2 L176.3 246.2" stroke="#93774f" stroke-width="1.3"/><path d="M180.2 241.1 L173.2 245.4" stroke="#93774f" stroke-width="1.3"/><path d="M178.5 240.1 L175.8 242.8" stroke="#93774f" stroke-width="1.3"/><path d="M267.5 139.5 C265.8 140.4 260.8 142.6 257.0 145.0 C253.2 147.4 249.3 150.3 245.0 154.0 C240.7 157.7 235.2 162.2 231.0 167.0 C226.8 171.8 223.3 177.3 220.0 183.0 C216.7 188.7 213.7 194.8 211.0 201.0 C208.3 207.2 206.3 213.7 204.0 220.0 C201.7 226.3 199.2 233.7 197.0 239.0 C194.8 244.3 192.3 248.8 190.5 252.0 C188.7 255.2 186.8 257.0 186.0 258.0" stroke="#8e7350" stroke-width="8.5"/><path d="M267.5 139.5 C265.8 140.4 260.8 142.6 257.0 145.0 C253.2 147.4 249.3 150.3 245.0 154.0 C240.7 157.7 235.2 162.2 231.0 167.0 C226.8 171.8 223.3 177.3 220.0 183.0 C216.7 188.7 213.7 194.8 211.0 201.0 C208.3 207.2 206.3 213.7 204.0 220.0 C201.7 226.3 199.2 233.7 197.0 239.0 C194.8 244.3 192.3 248.8 190.5 252.0 C188.7 255.2 186.8 257.0 186.0 258.0" stroke="#a3875f" stroke-width="7.0" stroke-dasharray="1.8 2.2" stroke-linecap="butt"/><path d="M267.5 139.5 C265.8 140.4 260.8 142.6 257.0 145.0 C253.2 147.4 249.3 150.3 245.0 154.0 C240.7 157.7 235.2 162.2 231.0 167.0 C226.8 171.8 223.3 177.3 220.0 183.0 C216.7 188.7 213.7 194.8 211.0 201.0 C208.3 207.2 206.3 213.7 204.0 220.0 C201.7 226.3 199.2 233.7 197.0 239.0 C194.8 244.3 192.3 248.8 190.5 252.0 C188.7 255.2 186.8 257.0 186.0 258.0" stroke="#70583a" stroke-width="9.5" stroke-dasharray="0.7 3.3" stroke-dashoffset="2.6" stroke-linecap="butt" opacity="0.6"/><path d="M183.7 256.3 L177.4 261.9" stroke="#93774f" stroke-width="1.3"/><path d="M184.8 257.1 L183.0 262.2" stroke="#93774f" stroke-width="1.3"/><path d="M188.3 259.7 L188.5 265.5" stroke="#93774f" stroke-width="1.3"/><path d="M184.1 256.6 L183.7 260.4" stroke="#93774f" stroke-width="1.3"/><path d="M186.8 258.6 L186.2 263.3" stroke="#93774f" stroke-width="1.3"/><path d="M186.4 258.3 L182.8 259.8" stroke="#93774f" stroke-width="1.3"/><path d="M183.8 256.3 L178.6 262.3" stroke="#93774f" stroke-width="1.3"/><path d="M186.6 258.4 L182.1 260.4" stroke="#93774f" stroke-width="1.3"/><path d="M182.8 255.6 L179.4 262.7" stroke="#93774f" stroke-width="1.3"/><path d="M187.9 259.4 L187.2 263.7" stroke="#93774f" stroke-width="1.3"/><path d="M185.4 257.5 L183.8 263.2" stroke="#93774f" stroke-width="1.3"/><path d="M186.6 258.4 L185.5 261.8" stroke="#93774f" stroke-width="1.3"/><path d="M269.0 143.0 C267.5 144.2 263.3 147.2 260.0 150.0 C256.7 152.8 252.8 155.8 249.0 160.0 C245.2 164.2 240.7 169.7 237.0 175.0 C233.3 180.3 230.0 186.0 227.0 192.0 C224.0 198.0 221.3 204.5 219.0 211.0 C216.7 217.5 215.0 224.3 213.0 231.0 C211.0 237.7 209.0 244.5 207.0 251.0 C205.0 257.5 202.5 264.3 201.0 270.0 C199.5 275.7 198.5 282.5 198.0 285.0" stroke="#8e7350" stroke-width="9"/><path d="M269.0 143.0 C267.5 144.2 263.3 147.2 260.0 150.0 C256.7 152.8 252.8 155.8 249.0 160.0 C245.2 164.2 240.7 169.7 237.0 175.0 C233.3 180.3 230.0 186.0 227.0 192.0 C224.0 198.0 221.3 204.5 219.0 211.0 C216.7 217.5 215.0 224.3 213.0 231.0 C211.0 237.7 209.0 244.5 207.0 251.0 C205.0 257.5 202.5 264.3 201.0 270.0 C199.5 275.7 198.5 282.5 198.0 285.0" stroke="#a3875f" stroke-width="7.5" stroke-dasharray="1.8 2.2" stroke-linecap="butt"/><path d="M269.0 143.0 C267.5 144.2 263.3 147.2 260.0 150.0 C256.7 152.8 252.8 155.8 249.0 160.0 C245.2 164.2 240.7 169.7 237.0 175.0 C233.3 180.3 230.0 186.0 227.0 192.0 C224.0 198.0 221.3 204.5 219.0 211.0 C216.7 217.5 215.0 224.3 213.0 231.0 C211.0 237.7 209.0 244.5 207.0 251.0 C205.0 257.5 202.5 264.3 201.0 270.0 C199.5 275.7 198.5 282.5 198.0 285.0" stroke="#70583a" stroke-width="10" stroke-dasharray="0.7 3.3" stroke-dashoffset="2.6" stroke-linecap="butt" opacity="0.6"/><path d="M193.9 284.2 L193.8 290.5" stroke="#93774f" stroke-width="1.3"/><path d="M196.9 284.8 L194.2 290.2" stroke="#93774f" stroke-width="1.3"/><path d="M194.4 284.3 L192.8 287.7" stroke="#93774f" stroke-width="1.3"/><path d="M195.3 284.5 L190.9 291.0" stroke="#93774f" stroke-width="1.3"/><path d="M201.6 285.7 L201.3 291.2" stroke="#93774f" stroke-width="1.3"/><path d="M201.9 285.8 L200.5 289.3" stroke="#93774f" stroke-width="1.3"/><path d="M199.4 285.3 L200.3 289.5" stroke="#93774f" stroke-width="1.3"/><path d="M201.1 285.6 L202.6 288.8" stroke="#93774f" stroke-width="1.3"/><path d="M202.3 285.9 L204.1 290.8" stroke="#93774f" stroke-width="1.3"/><path d="M201.2 285.6 L196.8 290.6" stroke="#93774f" stroke-width="1.3"/><path d="M199.2 285.2 L200.0 290.4" stroke="#93774f" stroke-width="1.3"/><path d="M193.6 284.1 L196.1 291.4" stroke="#93774f" stroke-width="1.3"/><path d="M270.5 146.5 C269.1 147.8 264.9 150.9 262.0 154.0 C259.1 157.1 256.3 160.5 253.0 165.0 C249.7 169.5 245.3 175.3 242.0 181.0 C238.7 186.7 235.7 192.7 233.0 199.0 C230.3 205.3 228.0 212.2 226.0 219.0 C224.0 225.8 222.7 233.0 221.0 240.0 C219.3 247.0 217.5 253.8 216.0 261.0 C214.5 268.2 212.7 279.3 212.0 283.0" stroke="#8e7350" stroke-width="9"/><path d="M270.5 146.5 C269.1 147.8 264.9 150.9 262.0 154.0 C259.1 157.1 256.3 160.5 253.0 165.0 C249.7 169.5 245.3 175.3 242.0 181.0 C238.7 186.7 235.7 192.7 233.0 199.0 C230.3 205.3 228.0 212.2 226.0 219.0 C224.0 225.8 222.7 233.0 221.0 240.0 C219.3 247.0 217.5 253.8 216.0 261.0 C214.5 268.2 212.7 279.3 212.0 283.0" stroke="#a3875f" stroke-width="7.5" stroke-dasharray="1.8 2.2" stroke-linecap="butt"/><path d="M270.5 146.5 C269.1 147.8 264.9 150.9 262.0 154.0 C259.1 157.1 256.3 160.5 253.0 165.0 C249.7 169.5 245.3 175.3 242.0 181.0 C238.7 186.7 235.7 192.7 233.0 199.0 C230.3 205.3 228.0 212.2 226.0 219.0 C224.0 225.8 222.7 233.0 221.0 240.0 C219.3 247.0 217.5 253.8 216.0 261.0 C214.5 268.2 212.7 279.3 212.0 283.0" stroke="#70583a" stroke-width="10" stroke-dasharray="0.7 3.3" stroke-dashoffset="2.6" stroke-linecap="butt" opacity="0.6"/><path d="M215.7 283.7 L215.0 289.5" stroke="#93774f" stroke-width="1.3"/><path d="M214.1 283.4 L216.0 288.2" stroke="#93774f" stroke-width="1.3"/><path d="M216.3 283.8 L213.7 287.2" stroke="#93774f" stroke-width="1.3"/><path d="M215.2 283.6 L210.7 287.8" stroke="#93774f" stroke-width="1.3"/><path d="M211.7 283.0 L210.9 286.5" stroke="#93774f" stroke-width="1.3"/><path d="M210.2 282.7 L204.4 287.8" stroke="#93774f" stroke-width="1.3"/><path d="M215.0 283.5 L215.8 288.8" stroke="#93774f" stroke-width="1.3"/><path d="M209.5 282.5 L206.2 287.8" stroke="#93774f" stroke-width="1.3"/><path d="M209.2 282.5 L209.5 287.1" stroke="#93774f" stroke-width="1.3"/><path d="M209.2 282.5 L203.4 287.6" stroke="#93774f" stroke-width="1.3"/><path d="M214.5 283.4 L210.2 289.3" stroke="#93774f" stroke-width="1.3"/><path d="M216.2 283.8 L215.2 288.9" stroke="#93774f" stroke-width="1.3"/><path d="M272.0 150.0 C270.8 151.2 267.7 154.0 265.0 157.0 C262.3 160.0 259.2 163.5 256.0 168.0 C252.8 172.5 249.2 178.2 246.0 184.0 C242.8 189.8 239.5 196.3 237.0 203.0 C234.5 209.7 232.7 216.8 231.0 224.0 C229.3 231.2 228.3 239.0 227.0 246.0 C225.7 253.0 224.2 260.3 223.0 266.0 C221.8 271.7 220.5 277.7 220.0 280.0" stroke="#8e7350" stroke-width="8.5"/><path d="M272.0 150.0 C270.8 151.2 267.7 154.0 265.0 157.0 C262.3 160.0 259.2 163.5 256.0 168.0 C252.8 172.5 249.2 178.2 246.0 184.0 C242.8 189.8 239.5 196.3 237.0 203.0 C234.5 209.7 232.7 216.8 231.0 224.0 C229.3 231.2 228.3 239.0 227.0 246.0 C225.7 253.0 224.2 260.3 223.0 266.0 C221.8 271.7 220.5 277.7 220.0 280.0" stroke="#a3875f" stroke-width="7.0" stroke-dasharray="1.8 2.2" stroke-linecap="butt"/><path d="M272.0 150.0 C270.8 151.2 267.7 154.0 265.0 157.0 C262.3 160.0 259.2 163.5 256.0 168.0 C252.8 172.5 249.2 178.2 246.0 184.0 C242.8 189.8 239.5 196.3 237.0 203.0 C234.5 209.7 232.7 216.8 231.0 224.0 C229.3 231.2 228.3 239.0 227.0 246.0 C225.7 253.0 224.2 260.3 223.0 266.0 C221.8 271.7 220.5 277.7 220.0 280.0" stroke="#70583a" stroke-width="9.5" stroke-dasharray="0.7 3.3" stroke-dashoffset="2.6" stroke-linecap="butt" opacity="0.6"/><path d="M222.1 280.4 L224.2 284.9" stroke="#93774f" stroke-width="1.3"/><path d="M220.5 280.1 L216.6 287.4" stroke="#93774f" stroke-width="1.3"/><path d="M216.1 279.2 L209.9 284.9" stroke="#93774f" stroke-width="1.3"/><path d="M222.3 280.5 L222.2 285.1" stroke="#93774f" stroke-width="1.3"/><path d="M218.9 279.8 L219.9 284.2" stroke="#93774f" stroke-width="1.3"/><path d="M220.2 280.0 L214.8 285.6" stroke="#93774f" stroke-width="1.3"/><path d="M223.6 280.8 L220.5 287.6" stroke="#93774f" stroke-width="1.3"/><path d="M217.6 279.5 L214.2 286.8" stroke="#93774f" stroke-width="1.3"/><path d="M222.8 280.6 L219.6 285.6" stroke="#93774f" stroke-width="1.3"/><path d="M217.4 279.4 L214.4 283.7" stroke="#93774f" stroke-width="1.3"/><path d="M220.8 280.2 L216.7 283.7" stroke="#93774f" stroke-width="1.3"/><path d="M222.8 280.6 L217.5 285.4" stroke="#93774f" stroke-width="1.3"/><path d="M273.3 149.0 C273.1 150.5 272.9 155.3 272.0 158.0 C271.1 160.7 269.6 162.8 268.0 165.0 C266.4 167.2 264.4 169.4 262.5 171.5 C260.6 173.6 258.5 175.4 256.5 177.5 C254.5 179.6 252.4 181.8 250.5 184.0 C248.6 186.2 246.6 188.5 245.0 191.0 C243.4 193.5 241.9 196.3 240.7 199.0 C239.5 201.7 238.8 204.3 237.8 207.0 C236.9 209.7 236.1 210.8 235.0 215.0 C233.9 219.2 232.4 227.3 231.5 232.0 C230.6 236.7 230.2 238.3 229.7 243.0 C229.2 247.7 229.0 254.7 228.5 260.0 C228.0 265.3 226.8 272.5 226.5 275.0" stroke="#8e7350" stroke-width="7"/><path d="M273.3 149.0 C273.1 150.5 272.9 155.3 272.0 158.0 C271.1 160.7 269.6 162.8 268.0 165.0 C266.4 167.2 264.4 169.4 262.5 171.5 C260.6 173.6 258.5 175.4 256.5 177.5 C254.5 179.6 252.4 181.8 250.5 184.0 C248.6 186.2 246.6 188.5 245.0 191.0 C243.4 193.5 241.9 196.3 240.7 199.0 C239.5 201.7 238.8 204.3 237.8 207.0 C236.9 209.7 236.1 210.8 235.0 215.0 C233.9 219.2 232.4 227.3 231.5 232.0 C230.6 236.7 230.2 238.3 229.7 243.0 C229.2 247.7 229.0 254.7 228.5 260.0 C228.0 265.3 226.8 272.5 226.5 275.0" stroke="#a3875f" stroke-width="5.5" stroke-dasharray="1.8 2.2" stroke-linecap="butt"/><path d="M273.3 149.0 C273.1 150.5 272.9 155.3 272.0 158.0 C271.1 160.7 269.6 162.8 268.0 165.0 C266.4 167.2 264.4 169.4 262.5 171.5 C260.6 173.6 258.5 175.4 256.5 177.5 C254.5 179.6 252.4 181.8 250.5 184.0 C248.6 186.2 246.6 188.5 245.0 191.0 C243.4 193.5 241.9 196.3 240.7 199.0 C239.5 201.7 238.8 204.3 237.8 207.0 C236.9 209.7 236.1 210.8 235.0 215.0 C233.9 219.2 232.4 227.3 231.5 232.0 C230.6 236.7 230.2 238.3 229.7 243.0 C229.2 247.7 229.0 254.7 228.5 260.0 C228.0 265.3 226.8 272.5 226.5 275.0" stroke="#70583a" stroke-width="8" stroke-dasharray="0.7 3.3" stroke-dashoffset="2.6" stroke-linecap="butt" opacity="0.6"/><path d="M223.5 274.6 L225.1 278.5" stroke="#93774f" stroke-width="1.3"/><path d="M224.1 274.7 L221.8 278.3" stroke="#93774f" stroke-width="1.3"/><path d="M227.6 275.1 L222.7 279.9" stroke="#93774f" stroke-width="1.3"/><path d="M230.1 275.5 L229.3 279.6" stroke="#93774f" stroke-width="1.3"/><path d="M226.3 275.0 L221.5 279.7" stroke="#93774f" stroke-width="1.3"/><path d="M223.7 274.6 L219.9 278.8" stroke="#93774f" stroke-width="1.3"/><path d="M228.3 275.2 L225.8 279.0" stroke="#93774f" stroke-width="1.3"/><path d="M225.9 274.9 L226.6 279.6" stroke="#93774f" stroke-width="1.3"/><path d="M229.2 275.4 L230.4 280.8" stroke="#93774f" stroke-width="1.3"/><path d="M226.8 275.0 L223.4 279.0" stroke="#93774f" stroke-width="1.3"/><path d="M227.1 275.1 L225.1 282.9" stroke="#93774f" stroke-width="1.3"/><path d="M226.3 275.0 L222.3 279.5" stroke="#93774f" stroke-width="1.3"/><path d="M270.0 131.5 C273.7 131.5 285.3 130.8 292.0 131.5 C298.7 132.2 304.2 133.6 310.0 135.5 C315.8 137.4 321.5 139.6 327.0 143.0 C332.5 146.4 338.0 151.3 343.0 156.0 C348.0 160.7 352.7 166.0 357.0 171.0 C361.3 176.0 365.2 181.8 369.0 186.0 C372.8 190.2 378.2 194.3 380.0 196.0" stroke="#8e7350" stroke-width="8.5"/><path d="M270.0 131.5 C273.7 131.5 285.3 130.8 292.0 131.5 C298.7 132.2 304.2 133.6 310.0 135.5 C315.8 137.4 321.5 139.6 327.0 143.0 C332.5 146.4 338.0 151.3 343.0 156.0 C348.0 160.7 352.7 166.0 357.0 171.0 C361.3 176.0 365.2 181.8 369.0 186.0 C372.8 190.2 378.2 194.3 380.0 196.0" stroke="#a3875f" stroke-width="7.0" stroke-dasharray="1.8 2.2" stroke-linecap="butt"/><path d="M270.0 131.5 C273.7 131.5 285.3 130.8 292.0 131.5 C298.7 132.2 304.2 133.6 310.0 135.5 C315.8 137.4 321.5 139.6 327.0 143.0 C332.5 146.4 338.0 151.3 343.0 156.0 C348.0 160.7 352.7 166.0 357.0 171.0 C361.3 176.0 365.2 181.8 369.0 186.0 C372.8 190.2 378.2 194.3 380.0 196.0" stroke="#70583a" stroke-width="9.5" stroke-dasharray="0.7 3.3" stroke-dashoffset="2.6" stroke-linecap="butt" opacity="0.6"/><path d="M380.4 195.6 L382.9 198.1" stroke="#93774f" stroke-width="1.3"/><path d="M378.2 197.9 L381.6 199.0" stroke="#93774f" stroke-width="1.3"/><path d="M378.7 197.5 L384.3 199.1" stroke="#93774f" stroke-width="1.3"/><path d="M379.9 196.1 L383.4 199.9" stroke="#93774f" stroke-width="1.3"/><path d="M382.3 193.4 L387.4 198.9" stroke="#93774f" stroke-width="1.3"/><path d="M381.3 194.6 L384.5 198.0" stroke="#93774f" stroke-width="1.3"/><path d="M379.6 196.4 L382.3 201.8" stroke="#93774f" stroke-width="1.3"/><path d="M380.3 195.6 L384.0 202.8" stroke="#93774f" stroke-width="1.3"/><path d="M379.9 196.1 L383.7 200.8" stroke="#93774f" stroke-width="1.3"/><path d="M379.8 196.2 L382.9 201.1" stroke="#93774f" stroke-width="1.3"/><path d="M378.8 197.3 L385.1 202.6" stroke="#93774f" stroke-width="1.3"/><path d="M381.4 194.4 L383.9 202.3" stroke="#93774f" stroke-width="1.3"/><path d="M290.0 137.5 C291.8 137.9 297.0 138.6 301.0 140.0 C305.0 141.4 309.5 143.2 314.0 146.0 C318.5 148.8 323.5 152.9 328.0 157.0 C332.5 161.1 337.0 166.4 341.0 170.7 C345.0 175.0 348.6 179.0 352.0 183.0 C355.4 187.0 357.4 191.1 361.4 194.6 C365.4 198.1 373.6 202.4 376.0 204.0" stroke="#8e7350" stroke-width="8"/><path d="M290.0 137.5 C291.8 137.9 297.0 138.6 301.0 140.0 C305.0 141.4 309.5 143.2 314.0 146.0 C318.5 148.8 323.5 152.9 328.0 157.0 C332.5 161.1 337.0 166.4 341.0 170.7 C345.0 175.0 348.6 179.0 352.0 183.0 C355.4 187.0 357.4 191.1 361.4 194.6 C365.4 198.1 373.6 202.4 376.0 204.0" stroke="#a3875f" stroke-width="6.5" stroke-dasharray="1.8 2.2" stroke-linecap="butt"/><path d="M290.0 137.5 C291.8 137.9 297.0 138.6 301.0 140.0 C305.0 141.4 309.5 143.2 314.0 146.0 C318.5 148.8 323.5 152.9 328.0 157.0 C332.5 161.1 337.0 166.4 341.0 170.7 C345.0 175.0 348.6 179.0 352.0 183.0 C355.4 187.0 357.4 191.1 361.4 194.6 C365.4 198.1 373.6 202.4 376.0 204.0" stroke="#70583a" stroke-width="9" stroke-dasharray="0.7 3.3" stroke-dashoffset="2.6" stroke-linecap="butt" opacity="0.6"/><path d="M374.5 206.4 L381.0 211.4" stroke="#93774f" stroke-width="1.3"/><path d="M376.3 203.6 L380.4 203.9" stroke="#93774f" stroke-width="1.3"/><path d="M377.9 201.0 L382.6 200.9" stroke="#93774f" stroke-width="1.3"/><path d="M374.2 206.8 L379.3 212.2" stroke="#93774f" stroke-width="1.3"/><path d="M375.3 205.1 L382.3 205.7" stroke="#93774f" stroke-width="1.3"/><path d="M373.9 207.3 L381.8 207.8" stroke="#93774f" stroke-width="1.3"/><path d="M376.5 203.3 L384.6 204.8" stroke="#93774f" stroke-width="1.3"/><path d="M374.5 206.3 L381.7 210.8" stroke="#93774f" stroke-width="1.3"/><path d="M375.9 204.1 L381.6 204.7" stroke="#93774f" stroke-width="1.3"/><path d="M376.8 202.7 L381.0 204.3" stroke="#93774f" stroke-width="1.3"/><path d="M375.8 204.4 L378.0 207.2" stroke="#93774f" stroke-width="1.3"/><path d="M376.8 202.8 L379.9 204.5" stroke="#93774f" stroke-width="1.3"/><path d="M340.0 168.0 C341.2 171.0 344.5 180.2 347.0 186.0 C349.5 191.8 352.5 198.7 355.0 203.0 C357.5 207.3 359.7 209.4 362.0 212.0 C364.3 214.6 367.8 217.4 369.0 218.5" stroke="#8e7350" stroke-width="7"/><path d="M340.0 168.0 C341.2 171.0 344.5 180.2 347.0 186.0 C349.5 191.8 352.5 198.7 355.0 203.0 C357.5 207.3 359.7 209.4 362.0 212.0 C364.3 214.6 367.8 217.4 369.0 218.5" stroke="#a3875f" stroke-width="5.5" stroke-dasharray="1.8 2.2" stroke-linecap="butt"/><path d="M340.0 168.0 C341.2 171.0 344.5 180.2 347.0 186.0 C349.5 191.8 352.5 198.7 355.0 203.0 C357.5 207.3 359.7 209.4 362.0 212.0 C364.3 214.6 367.8 217.4 369.0 218.5" stroke="#70583a" stroke-width="8" stroke-dasharray="0.7 3.3" stroke-dashoffset="2.6" stroke-linecap="butt" opacity="0.6"/><path d="M371.2 216.1 L374.9 220.9" stroke="#93774f" stroke-width="1.3"/><path d="M366.6 221.1 L367.7 228.5" stroke="#93774f" stroke-width="1.3"/><path d="M371.3 216.0 L376.1 216.9" stroke="#93774f" stroke-width="1.3"/><path d="M370.9 216.5 L372.9 220.9" stroke="#93774f" stroke-width="1.3"/><path d="M367.4 220.3 L373.8 225.1" stroke="#93774f" stroke-width="1.3"/><path d="M366.9 220.8 L370.8 222.5" stroke="#93774f" stroke-width="1.3"/><path d="M371.1 216.2 L375.7 221.5" stroke="#93774f" stroke-width="1.3"/><path d="M369.4 218.1 L376.3 219.0" stroke="#93774f" stroke-width="1.3"/><path d="M368.3 219.2 L376.4 220.5" stroke="#93774f" stroke-width="1.3"/><path d="M367.2 220.5 L368.7 224.1" stroke="#93774f" stroke-width="1.3"/><path d="M369.2 218.2 L377.0 219.3" stroke="#93774f" stroke-width="1.3"/><path d="M366.8 220.8 L372.2 224.0" stroke="#93774f" stroke-width="1.3"/><path d="M348.0 200.0 C348.8 202.5 351.3 210.3 353.0 215.0 C354.7 219.7 356.3 224.5 358.0 228.0 C359.7 231.5 362.2 234.7 363.0 236.0" stroke="#8e7350" stroke-width="7"/><path d="M348.0 200.0 C348.8 202.5 351.3 210.3 353.0 215.0 C354.7 219.7 356.3 224.5 358.0 228.0 C359.7 231.5 362.2 234.7 363.0 236.0" stroke="#a3875f" stroke-width="5.5" stroke-dasharray="1.8 2.2" stroke-linecap="butt"/><path d="M348.0 200.0 C348.8 202.5 351.3 210.3 353.0 215.0 C354.7 219.7 356.3 224.5 358.0 228.0 C359.7 231.5 362.2 234.7 363.0 236.0" stroke="#70583a" stroke-width="8" stroke-dasharray="0.7 3.3" stroke-dashoffset="2.6" stroke-linecap="butt" opacity="0.6"/><path d="M362.8 236.1 L366.0 238.7" stroke="#93774f" stroke-width="1.3"/><path d="M365.2 234.7 L368.4 237.1" stroke="#93774f" stroke-width="1.3"/><path d="M364.2 235.3 L368.4 236.9" stroke="#93774f" stroke-width="1.3"/><path d="M364.3 235.2 L369.7 240.1" stroke="#93774f" stroke-width="1.3"/><path d="M364.0 235.4 L366.3 239.1" stroke="#93774f" stroke-width="1.3"/><path d="M366.1 234.1 L370.6 235.6" stroke="#93774f" stroke-width="1.3"/><path d="M365.0 234.8 L366.4 240.9" stroke="#93774f" stroke-width="1.3"/><path d="M365.5 234.4 L370.1 241.2" stroke="#93774f" stroke-width="1.3"/><path d="M363.0 236.0 L363.7 241.6" stroke="#93774f" stroke-width="1.3"/><path d="M363.0 236.0 L363.4 241.5" stroke="#93774f" stroke-width="1.3"/><path d="M364.0 235.4 L366.5 243.4" stroke="#93774f" stroke-width="1.3"/><path d="M362.1 236.5 L362.8 243.5" stroke="#93774f" stroke-width="1.3"/><path d="M292.5 142.0 C294.4 142.2 299.8 142.3 304.0 143.5 C308.2 144.7 313.7 146.8 318.0 149.0 C322.3 151.2 326.4 154.2 330.0 157.0 C333.6 159.8 337.0 161.9 339.5 165.5 C342.0 169.1 343.4 174.2 345.0 178.7 C346.6 183.2 347.9 187.8 348.8 192.3 C349.7 196.9 349.8 201.1 350.2 206.0 C350.6 210.9 350.8 216.3 351.0 222.0 C351.2 227.7 351.2 234.3 351.5 240.0 C351.8 245.7 352.1 250.8 352.5 256.0 C352.9 261.2 353.8 268.5 354.0 271.0" stroke="#8e7350" stroke-width="8.5"/><path d="M292.5 142.0 C294.4 142.2 299.8 142.3 304.0 143.5 C308.2 144.7 313.7 146.8 318.0 149.0 C322.3 151.2 326.4 154.2 330.0 157.0 C333.6 159.8 337.0 161.9 339.5 165.5 C342.0 169.1 343.4 174.2 345.0 178.7 C346.6 183.2 347.9 187.8 348.8 192.3 C349.7 196.9 349.8 201.1 350.2 206.0 C350.6 210.9 350.8 216.3 351.0 222.0 C351.2 227.7 351.2 234.3 351.5 240.0 C351.8 245.7 352.1 250.8 352.5 256.0 C352.9 261.2 353.8 268.5 354.0 271.0" stroke="#a3875f" stroke-width="7.0" stroke-dasharray="1.8 2.2" stroke-linecap="butt"/><path d="M292.5 142.0 C294.4 142.2 299.8 142.3 304.0 143.5 C308.2 144.7 313.7 146.8 318.0 149.0 C322.3 151.2 326.4 154.2 330.0 157.0 C333.6 159.8 337.0 161.9 339.5 165.5 C342.0 169.1 343.4 174.2 345.0 178.7 C346.6 183.2 347.9 187.8 348.8 192.3 C349.7 196.9 349.8 201.1 350.2 206.0 C350.6 210.9 350.8 216.3 351.0 222.0 C351.2 227.7 351.2 234.3 351.5 240.0 C351.8 245.7 352.1 250.8 352.5 256.0 C352.9 261.2 353.8 268.5 354.0 271.0" stroke="#70583a" stroke-width="9.5" stroke-dasharray="0.7 3.3" stroke-dashoffset="2.6" stroke-linecap="butt" opacity="0.6"/><path d="M357.9 270.6 L359.1 275.7" stroke="#93774f" stroke-width="1.3"/><path d="M351.9 271.2 L354.1 274.4" stroke="#93774f" stroke-width="1.3"/><path d="M357.6 270.6 L359.5 274.5" stroke="#93774f" stroke-width="1.3"/><path d="M352.5 271.1 L349.6 278.4" stroke="#93774f" stroke-width="1.3"/><path d="M355.8 270.8 L357.7 275.1" stroke="#93774f" stroke-width="1.3"/><path d="M354.5 271.0 L355.1 275.2" stroke="#93774f" stroke-width="1.3"/><path d="M349.9 271.4 L353.4 279.0" stroke="#93774f" stroke-width="1.3"/><path d="M349.9 271.4 L350.1 276.1" stroke="#93774f" stroke-width="1.3"/><path d="M358.3 270.6 L360.2 275.5" stroke="#93774f" stroke-width="1.3"/><path d="M354.0 271.0 L355.5 276.7" stroke="#93774f" stroke-width="1.3"/><path d="M358.3 270.6 L361.3 275.8" stroke="#93774f" stroke-width="1.3"/><path d="M354.9 270.9 L356.5 274.5" stroke="#93774f" stroke-width="1.3"/><path d="M340.0 230.0 C340.3 232.5 341.1 240.0 342.0 245.0 C342.9 250.0 344.5 255.3 345.5 260.0 C346.5 264.7 347.6 270.8 348.0 273.0" stroke="#8e7350" stroke-width="8"/><path d="M340.0 230.0 C340.3 232.5 341.1 240.0 342.0 245.0 C342.9 250.0 344.5 255.3 345.5 260.0 C346.5 264.7 347.6 270.8 348.0 273.0" stroke="#a3875f" stroke-width="6.5" stroke-dasharray="1.8 2.2" stroke-linecap="butt"/><path d="M340.0 230.0 C340.3 232.5 341.1 240.0 342.0 245.0 C342.9 250.0 344.5 255.3 345.5 260.0 C346.5 264.7 347.6 270.8 348.0 273.0" stroke="#70583a" stroke-width="9" stroke-dasharray="0.7 3.3" stroke-dashoffset="2.6" stroke-linecap="butt" opacity="0.6"/><path d="M349.6 272.7 L352.3 275.1" stroke="#93774f" stroke-width="1.3"/><path d="M347.8 273.0 L351.2 278.5" stroke="#93774f" stroke-width="1.3"/><path d="M346.2 273.3 L345.1 280.0" stroke="#93774f" stroke-width="1.3"/><path d="M349.4 272.7 L347.6 277.9" stroke="#93774f" stroke-width="1.3"/><path d="M346.2 273.4 L344.2 277.1" stroke="#93774f" stroke-width="1.3"/><path d="M345.3 273.5 L345.2 277.2" stroke="#93774f" stroke-width="1.3"/><path d="M346.1 273.4 L343.8 279.6" stroke="#93774f" stroke-width="1.3"/><path d="M347.8 273.0 L346.8 277.1" stroke="#93774f" stroke-width="1.3"/><path d="M345.5 273.5 L346.9 281.0" stroke="#93774f" stroke-width="1.3"/><path d="M344.8 273.6 L343.1 279.8" stroke="#93774f" stroke-width="1.3"/><path d="M350.2 272.6 L349.8 279.5" stroke="#93774f" stroke-width="1.3"/><path d="M349.1 272.8 L352.3 275.5" stroke="#93774f" stroke-width="1.3"/><path d="M294.0 147.0 C294.2 148.1 294.1 151.9 295.0 153.5 C295.9 155.1 297.5 155.6 299.5 156.5 C301.5 157.4 304.6 157.9 307.0 159.0 C309.4 160.1 311.8 161.2 314.0 163.0 C316.2 164.8 318.3 167.4 320.0 170.0 C321.7 172.6 322.7 175.0 324.0 178.7 C325.3 182.4 326.9 187.8 328.0 192.3 C329.1 196.9 329.6 201.4 330.4 206.0 C331.2 210.6 332.0 214.9 332.8 219.7 C333.6 224.5 334.1 229.4 335.0 235.0 C335.9 240.6 336.8 246.8 338.0 253.0 C339.2 259.2 341.3 268.8 342.0 272.0" stroke="#8e7350" stroke-width="8"/><path d="M294.0 147.0 C294.2 148.1 294.1 151.9 295.0 153.5 C295.9 155.1 297.5 155.6 299.5 156.5 C301.5 157.4 304.6 157.9 307.0 159.0 C309.4 160.1 311.8 161.2 314.0 163.0 C316.2 164.8 318.3 167.4 320.0 170.0 C321.7 172.6 322.7 175.0 324.0 178.7 C325.3 182.4 326.9 187.8 328.0 192.3 C329.1 196.9 329.6 201.4 330.4 206.0 C331.2 210.6 332.0 214.9 332.8 219.7 C333.6 224.5 334.1 229.4 335.0 235.0 C335.9 240.6 336.8 246.8 338.0 253.0 C339.2 259.2 341.3 268.8 342.0 272.0" stroke="#a3875f" stroke-width="6.5" stroke-dasharray="1.8 2.2" stroke-linecap="butt"/><path d="M294.0 147.0 C294.2 148.1 294.1 151.9 295.0 153.5 C295.9 155.1 297.5 155.6 299.5 156.5 C301.5 157.4 304.6 157.9 307.0 159.0 C309.4 160.1 311.8 161.2 314.0 163.0 C316.2 164.8 318.3 167.4 320.0 170.0 C321.7 172.6 322.7 175.0 324.0 178.7 C325.3 182.4 326.9 187.8 328.0 192.3 C329.1 196.9 329.6 201.4 330.4 206.0 C331.2 210.6 332.0 214.9 332.8 219.7 C333.6 224.5 334.1 229.4 335.0 235.0 C335.9 240.6 336.8 246.8 338.0 253.0 C339.2 259.2 341.3 268.8 342.0 272.0" stroke="#70583a" stroke-width="9" stroke-dasharray="0.7 3.3" stroke-dashoffset="2.6" stroke-linecap="butt" opacity="0.6"/><path d="M341.5 272.1 L346.8 277.7" stroke="#93774f" stroke-width="1.3"/><path d="M340.5 272.3 L340.7 278.9" stroke="#93774f" stroke-width="1.3"/><path d="M339.6 272.5 L340.3 275.9" stroke="#93774f" stroke-width="1.3"/><path d="M341.7 272.1 L340.9 278.0" stroke="#93774f" stroke-width="1.3"/><path d="M340.1 272.4 L340.0 276.2" stroke="#93774f" stroke-width="1.3"/><path d="M343.9 271.6 L346.0 274.9" stroke="#93774f" stroke-width="1.3"/><path d="M340.0 272.4 L339.5 276.9" stroke="#93774f" stroke-width="1.3"/><path d="M343.0 271.8 L340.3 277.2" stroke="#93774f" stroke-width="1.3"/><path d="M339.8 272.5 L341.4 279.2" stroke="#93774f" stroke-width="1.3"/><path d="M345.4 271.3 L345.7 278.0" stroke="#93774f" stroke-width="1.3"/><path d="M340.0 272.4 L343.1 276.1" stroke="#93774f" stroke-width="1.3"/><path d="M346.0 271.2 L348.9 276.8" stroke="#93774f" stroke-width="1.3"/></g><g filter="url(#blur8)" style="mix-blend-mode:overlay"><ellipse cx="285" cy="134" rx="78" ry="17" fill="#fff" opacity="0.42"/><ellipse cx="203" cy="232" rx="34" ry="58" fill="#000" opacity="0.38"/><ellipse cx="352" cy="240" rx="22" ry="45" fill="#000" opacity="0.25"/></g><g filter="url(#blur1)"><ellipse cx="275.5" cy="134" rx="4.5" ry="2.6" fill="#ffffff" opacity="0.9"/><path d="M249 150 L238 161.5" stroke="#ddd6c8" stroke-width="2.6" stroke-linecap="round" opacity="0.6"/><path d="M219.5 174 Q215.5 185 215 196" stroke="#ddd6c8" stroke-width="2.4" fill="none" stroke-linecap="round" opacity="0.5"/></g></svg><span style="left:302.80px;top:389.10px;font-size:3.49px;color:#f2f2f2;transform:translate(-50%,0);">size: 800 x 550 zoom: 1.962</span><span style="left:302.80px;top:394.50px;font-size:3.49px;color:#f2f2f2;transform:translate(-50%,0);">Frame: 0, Iteration: 560, Lights: 2, Objects: 192</span><div style="left:568.00px;top:48.40px;width:200.00px;height:343.00px;background:#444444;"></div><span style="left:573.70px;top:47.70px;font-size:3.57px;color:#cfcfcf;transform:translate(-50%,0);">List</span><span style="left:590.60px;top:47.70px;font-size:3.57px;color:#cfcfcf;transform:translate(-50%,0);">Selected</span><span style="left:604.30px;top:47.70px;font-size:3.57px;color:#cfcfcf;transform:translate(-50%,0);">Focus</span><span style="left:621.60px;top:47.70px;font-size:3.57px;color:#cfcfcf;transform:translate(-50%,0);">Attributes</span><span style="left:655.60px;top:47.70px;font-size:3.57px;color:#cfcfcf;transform:translate(-50%,0);">Show</span><span style="left:668.70px;top:47.70px;font-size:3.57px;color:#cfcfcf;transform:translate(-50%,0);">Help</span><span style="left:640.00px;top:47.60px;font-size:4.48px;color:#2fbf3a;transform:translate(-50%,0);font-weight:bold">[Truns]</span><div style="left:569.00px;top:61.20px;width:191.00px;height:6.20px;background:#373737;"></div><span style="left:592.30px;top:59.30px;font-size:3.49px;color:#7a7a7a;transform:translate(-50%,0);">RPRUberMaterial1SG</span><div style="left:615.50px;top:61.20px;width:35.00px;height:6.20px;background:#444;"></div><span style="left:632.80px;top:59.30px;font-size:3.57px;color:#f0f0f0;transform:translate(-50%,0);font-weight:bold">RPRUberMaterial1</span><span style="left:615.60px;top:74.80px;font-size:3.49px;color:#c4c4c4;transform:translate(-100%,0);">RPRUberMaterial:</span><div style="left:618.00px;top:76.80px;width:48.20px;height:6.00px;background:#2b2b2b;"></div><span style="left:619.40px;top:74.80px;font-size:3.49px;color:#d8d8d8;transform:none;">RPRUberMaterial1</span><div style="left:670.40px;top:73.60px;width:3.20px;height:2.80px;background:#e0e0e0;border-radius:0.3px"></div><div style="left:673.60px;top:73.90px;width:1.60px;height:2.20px;background:#e0e0e0;clip-path:polygon(0 50%,100% 0,100% 100%)"></div><div style="left:670.40px;top:80.00px;width:3.20px;height:2.80px;background:transparent;border:0.6px solid #e0e0e0;box-sizing:border-box"></div><div style="left:673.60px;top:80.30px;width:1.60px;height:2.20px;background:#e0e0e0;clip-path:polygon(0 0,100% 50%,0 100%)"></div><div style="left:679.30px;top:70.20px;width:21.40px;height:6.20px;background:#5d5d5d;"></div><span style="left:690.00px;top:68.30px;font-size:3.57px;color:#e4e4e4;transform:translate(-50%,0);">Focus</span><div style="left:679.30px;top:77.20px;width:21.40px;height:6.20px;background:#5d5d5d;"></div><span style="left:690.00px;top:75.30px;font-size:3.57px;color:#e4e4e4;transform:translate(-50%,0);">Presets</span><div style="left:703.00px;top:118.30px;width:52.00px;height:5.20px;background:#5a5a5a;"></div><div style="left:703.00px;top:183.60px;width:52.00px;height:5.20px;background:#5a5a5a;"></div><div style="left:703.00px;top:242.50px;width:52.00px;height:5.20px;background:#5a5a5a;"></div><div style="left:703.00px;top:276.90px;width:52.00px;height:5.20px;background:#5a5a5a;"></div><div style="left:703.30px;top:132.50px;width:42.00px;height:1.20px;background:#2a2a2a;"></div><div style="left:745.80px;top:131.10px;width:2.00px;height:2.00px;background:#f2f2f2;"></div><div style="left:747.80px;top:133.10px;width:2.00px;height:2.00px;background:#f2f2f2;"></div><div style="left:747.80px;top:131.10px;width:2.00px;height:2.00px;background:#3a3a3a;"></div><div style="left:745.80px;top:133.10px;width:2.00px;height:2.00px;background:#3a3a3a;"></div><div style="left:703.30px;top:139.40px;width:38.00px;height:1.20px;background:#2a2a2a;"></div><div style="left:741.90px;top:137.90px;width:1.80px;height:3.80px;background:#c8c8c8;"></div><div style="left:745.80px;top:138.00px;width:2.00px;height:2.00px;background:#f2f2f2;"></div><div style="left:747.80px;top:140.00px;width:2.00px;height:2.00px;background:#f2f2f2;"></div><div style="left:747.80px;top:138.00px;width:2.00px;height:2.00px;background:#3a3a3a;"></div><div style="left:745.80px;top:140.00px;width:2.00px;height:2.00px;background:#3a3a3a;"></div><div style="left:703.30px;top:145.90px;width:38.00px;height:1.20px;background:#2a2a2a;"></div><div style="left:741.90px;top:144.40px;width:1.80px;height:3.80px;background:#c8c8c8;"></div><div style="left:745.80px;top:144.50px;width:2.00px;height:2.00px;background:#f2f2f2;"></div><div style="left:747.80px;top:146.50px;width:2.00px;height:2.00px;background:#f2f2f2;"></div><div style="left:747.80px;top:144.50px;width:2.00px;height:2.00px;background:#3a3a3a;"></div><div style="left:745.80px;top:146.50px;width:2.00px;height:2.00px;background:#3a3a3a;"></div><div style="left:703.30px;top:159.00px;width:38.00px;height:1.00px;background:#3e3e3e;"></div><div style="left:741.90px;top:157.40px;width:1.80px;height:3.80px;background:#666;"></div><div style="left:746.50px;top:159.15px;width:2.60px;height:0.70px;background:#6a6a6a;transform:rotate(35deg)"></div><div style="left:703.30px;top:164.90px;width:42.00px;height:1.20px;background:#2a2a2a;"></div><div style="left:745.80px;top:163.50px;width:2.00px;height:2.00px;background:#f2f2f2;"></div><div style="left:747.80px;top:165.50px;width:2.00px;height:2.00px;background:#f2f2f2;"></div><div style="left:747.80px;top:163.50px;width:2.00px;height:2.00px;background:#3a3a3a;"></div><div style="left:745.80px;top:165.50px;width:2.00px;height:2.00px;background:#3a3a3a;"></div><div style="left:703.30px;top:178.30px;width:42.00px;height:1.00px;background:#3e3e3e;"></div><div style="left:746.50px;top:178.45px;width:2.60px;height:0.70px;background:#6a6a6a;transform:rotate(35deg)"></div><div style="left:703.30px;top:198.40px;width:38.00px;height:1.20px;background:#2a2a2a;"></div><div style="left:741.90px;top:196.90px;width:1.80px;height:3.80px;background:#c8c8c8;"></div><div style="left:745.80px;top:197.00px;width:2.00px;height:2.00px;background:#f2f2f2;"></div><div style="left:747.80px;top:199.00px;width:2.00px;height:2.00px;background:#f2f2f2;"></div><div style="left:747.80px;top:197.00px;width:2.00px;height:2.00px;background:#3a3a3a;"></div><div style="left:745.80px;top:199.00px;width:2.00px;height:2.00px;background:#3a3a3a;"></div><div style="left:703.30px;top:204.90px;width:38.00px;height:1.20px;background:#2a2a2a;"></div><div style="left:741.90px;top:203.40px;width:1.80px;height:3.80px;background:#c8c8c8;"></div><div style="left:745.80px;top:203.50px;width:2.00px;height:2.00px;background:#f2f2f2;"></div><div style="left:747.80px;top:205.50px;width:2.00px;height:2.00px;background:#f2f2f2;"></div><div style="left:747.80px;top:203.50px;width:2.00px;height:2.00px;background:#3a3a3a;"></div><div style="left:745.80px;top:205.50px;width:2.00px;height:2.00px;background:#3a3a3a;"></div><div style="left:703.30px;top:211.70px;width:42.00px;height:1.20px;background:#2a2a2a;"></div><div style="left:745.80px;top:210.30px;width:2.00px;height:2.00px;background:#f2f2f2;"></div><div style="left:747.80px;top:212.30px;width:2.00px;height:2.00px;background:#f2f2f2;"></div><div style="left:747.80px;top:210.30px;width:2.00px;height:2.00px;background:#3a3a3a;"></div><div style="left:745.80px;top:212.30px;width:2.00px;height:2.00px;background:#3a3a3a;"></div><div style="left:703.30px;top:218.30px;width:42.00px;height:1.20px;background:#2a2a2a;"></div><div style="left:745.80px;top:216.90px;width:2.00px;height:2.00px;background:#f2f2f2;"></div><div style="left:747.80px;top:218.90px;width:2.00px;height:2.00px;background:#f2f2f2;"></div><div style="left:747.80px;top:216.90px;width:2.00px;height:2.00px;background:#3a3a3a;"></div><div style="left:745.80px;top:218.90px;width:2.00px;height:2.00px;background:#3a3a3a;"></div><div style="left:703.30px;top:225.10px;width:42.00px;height:1.20px;background:#2a2a2a;"></div><div style="left:745.80px;top:223.70px;width:2.00px;height:2.00px;background:#f2f2f2;"></div><div style="left:747.80px;top:225.70px;width:2.00px;height:2.00px;background:#f2f2f2;"></div><div style="left:747.80px;top:223.70px;width:2.00px;height:2.00px;background:#3a3a3a;"></div><div style="left:745.80px;top:225.70px;width:2.00px;height:2.00px;background:#3a3a3a;"></div><div style="left:703.30px;top:231.60px;width:42.00px;height:1.20px;background:#2a2a2a;"></div><div style="left:745.80px;top:230.20px;width:2.00px;height:2.00px;background:#f2f2f2;"></div><div style="left:747.80px;top:232.20px;width:2.00px;height:2.00px;background:#f2f2f2;"></div><div style="left:747.80px;top:230.20px;width:2.00px;height:2.00px;background:#3a3a3a;"></div><div style="left:745.80px;top:232.20px;width:2.00px;height:2.00px;background:#3a3a3a;"></div><div style="left:703.30px;top:238.50px;width:38.00px;height:1.00px;background:#3e3e3e;"></div><div style="left:741.90px;top:236.90px;width:1.80px;height:3.80px;background:#666;"></div><div style="left:746.50px;top:238.65px;width:2.60px;height:0.70px;background:#6a6a6a;transform:rotate(35deg)"></div><div style="left:703.30px;top:258.20px;width:42.00px;height:1.20px;background:#2a2a2a;"></div><div style="left:745.80px;top:256.80px;width:2.00px;height:2.00px;background:#f2f2f2;"></div><div style="left:747.80px;top:258.80px;width:2.00px;height:2.00px;background:#f2f2f2;"></div><div style="left:747.80px;top:256.80px;width:2.00px;height:2.00px;background:#3a3a3a;"></div><div style="left:745.80px;top:258.80px;width:2.00px;height:2.00px;background:#3a3a3a;"></div><div style="left:703.30px;top:271.00px;width:42.00px;height:1.00px;background:#3e3e3e;"></div><div style="left:746.50px;top:271.15px;width:2.60px;height:0.70px;background:#6a6a6a;transform:rotate(35deg)"></div><div style="left:703.30px;top:291.20px;width:38.00px;height:1.00px;background:#3e3e3e;"></div><div style="left:741.90px;top:289.60px;width:1.80px;height:3.80px;background:#666;"></div><div style="left:746.50px;top:291.35px;width:2.60px;height:0.70px;background:#6a6a6a;transform:rotate(35deg)"></div><div style="left:703.30px;top:298.30px;width:38.00px;height:1.00px;background:#3e3e3e;"></div><div style="left:741.90px;top:296.70px;width:1.80px;height:3.80px;background:#666;"></div><div style="left:746.50px;top:298.45px;width:2.60px;height:0.70px;background:#6a6a6a;transform:rotate(35deg)"></div><div style="left:703.30px;top:305.10px;width:42.00px;height:1.00px;background:#3e3e3e;"></div><div style="left:746.50px;top:305.25px;width:2.60px;height:0.70px;background:#6a6a6a;transform:rotate(35deg)"></div><div style="left:703.30px;top:317.90px;width:38.00px;height:1.00px;background:#3e3e3e;"></div><div style="left:741.90px;top:316.30px;width:1.80px;height:3.80px;background:#666;"></div><div style="left:746.50px;top:318.05px;width:2.60px;height:0.70px;background:#6a6a6a;transform:rotate(35deg)"></div><div style="left:703.30px;top:331.80px;width:42.00px;height:1.00px;background:#3e3e3e;"></div><div style="left:746.50px;top:331.95px;width:2.60px;height:0.70px;background:#6a6a6a;transform:rotate(35deg)"></div><div style="left:703.30px;top:343.70px;width:42.00px;height:1.00px;background:#3e3e3e;"></div><div style="left:746.50px;top:343.85px;width:2.60px;height:0.70px;background:#6a6a6a;transform:rotate(35deg)"></div><div style="left:703.30px;top:349.60px;width:42.00px;height:1.00px;background:#3e3e3e;"></div><div style="left:746.50px;top:349.75px;width:2.60px;height:0.70px;background:#6a6a6a;transform:rotate(35deg)"></div><div style="left:756.40px;top:116.00px;width:3.00px;height:240.00px;background:#3c3c3c;"></div><div style="left:756.40px;top:118.00px;width:3.00px;height:104.00px;background:#5e5e5e;border-radius:1px"></div><div style="left:756.90px;top:115.70px;width:2.00px;height:1.40px;background:#bbb;clip-path:polygon(50% 0,100% 100%,0 100%)"></div><div style="left:756.90px;top:353.30px;width:2.00px;height:1.40px;background:#bbb;clip-path:polygon(0 0,100% 0,50% 100%)"></div><div style="left:761.60px;top:48.40px;width:6.40px;height:343.00px;background:#414141;"></div><span style="left:765px;top:65px;font-size:3.3px;color:#8a8a8a;transform:translate(-50%,0) rotate(90deg);">Channel Box / Layer Editor</span><span style="left:765px;top:119px;font-size:3.3px;color:#8a8a8a;transform:translate(-50%,0) rotate(90deg);">Tool Settings</span><div style="left:761.60px;top:136.00px;width:6.40px;height:30.00px;background:#4a4a4a;"></div><span style="left:765px;top:146px;font-size:3.3px;color:#f0f0f0;transform:translate(-50%,0) rotate(90deg);">Attribute Editor</span><span style="left:765px;top:177px;font-size:3.3px;color:#8a8a8a;transform:translate(-50%,0) rotate(90deg);">XGen</span><span style="left:765px;top:210px;font-size:3.3px;color:#8a8a8a;transform:translate(-50%,0) rotate(90deg);">Modeling Toolkit</span><span style="left:765px;top:257px;font-size:3.3px;color:#8a8a8a;transform:translate(-50%,0) rotate(90deg);">Human IK</span><span style="left:573.00px;top:356.40px;font-size:3.57px;color:#e6e6e6;transform:none;font-weight:bold">Notes:  RPRUberMaterial1</span><div style="left:570.00px;top:363.60px;width:191.00px;height:15.20px;background:#2b2b2b;"></div><div style="left:570.00px;top:380.00px;width:62.40px;height:8.40px;background:#5d5d5d;"></div><span style="left:601.20px;top:379.20px;font-size:3.57px;color:#e4e4e4;transform:translate(-50%,0);">Select</span><div style="left:633.20px;top:380.00px;width:64.00px;height:8.40px;background:#5d5d5d;"></div><span style="left:665.20px;top:379.20px;font-size:3.57px;color:#e4e4e4;transform:translate(-50%,0);">Load Attributes</span><div style="left:698.00px;top:380.00px;width:63.00px;height:8.40px;background:#5d5d5d;"></div><span style="left:729.50px;top:379.20px;font-size:3.57px;color:#e4e4e4;transform:translate(-50%,0);">Copy Tab</span><div style="left:569.00px;top:85.50px;width:133.80px;height:269.20px;background:#444444;box-shadow:0 0 0 0.5px #2e2e2e"></div><div style="left:569.00px;top:85.50px;width:133.80px;height:9.00px;background:#ffffff;"></div><span style="left:572.00px;top:84.90px;font-size:6.58px;font-weight:bold;color:#22a7ad;transform-origin:0 50%;transform:scaleX(0.9)">M</span><span style="left:578.20px;top:85.10px;font-size:3.82px;color:#7d7d7d;transform:none;">Render Settings</span><span style="left:667.00px;top:84.60px;font-size:4.98px;color:#777;transform:translate(-50%,0);">–</span><span style="left:681.00px;top:84.90px;font-size:4.15px;color:#777;transform:translate(-50%,0);">☐</span><span style="left:694.60px;top:84.90px;font-size:4.15px;color:#777;transform:translate(-50%,0);">✕</span><span style="left:576.00px;top:94.30px;font-size:3.57px;color:#c8c8c8;transform:translate(-50%,0);">Edit</span><span style="left:588.70px;top:94.30px;font-size:3.57px;color:#c8c8c8;transform:translate(-50%,0);">Presets</span><span style="left:603.50px;top:94.30px;font-size:3.57px;color:#c8c8c8;transform:translate(-50%,0);">Help</span><span style="left:571.20px;top:101.60px;font-size:3.57px;color:#c8c8c8;transform:none;">Render Layer</span><div style="left:593.00px;top:103.80px;width:30.60px;height:5.80px;background:#626262;border-radius:0.5px"></div><span style="left:594.20px;top:101.70px;font-size:3.49px;color:#e8e8e8;transform:none;">masterLayer</span><span style="left:620.00px;top:101.70px;font-size:3.49px;color:#e8e8e8;transform:translate(-50%,0);">▾</span><span style="left:571.20px;top:109.30px;font-size:3.57px;color:#c8c8c8;transform:none;">Render Using</span><div style="left:594.50px;top:111.40px;width:43.40px;height:5.80px;background:#626262;border-radius:0.5px"></div><span style="left:595.70px;top:109.30px;font-size:3.49px;color:#e8e8e8;transform:none;">Radeon ProRender</span><span style="left:634.60px;top:109.30px;font-size:3.49px;color:#e8e8e8;transform:translate(-50%,0);">▾</span><div style="left:570.60px;top:120.80px;width:131.00px;height:6.20px;background:#3a3a3a;"></div><span style="left:581.30px;top:118.90px;font-size:3.57px;color:#8a8a8a;transform:translate(-50%,0);">Common</span><span style="left:601.60px;top:118.90px;font-size:3.57px;color:#8a8a8a;transform:translate(-50%,0);">System</span><span style="left:622.30px;top:118.90px;font-size:3.57px;color:#8a8a8a;transform:translate(-50%,0);">Sampling</span><span style="left:662.00px;top:118.90px;font-size:3.57px;color:#8a8a8a;transform:translate(-50%,0);">Effects</span><span style="left:679.50px;top:118.90px;font-size:3.57px;color:#8a8a8a;transform:translate(-50%,0);">AOVs</span><div style="left:635.60px;top:120.80px;width:17.00px;height:6.40px;background:#4a4a4a;"></div><span style="left:644.00px;top:118.90px;font-size:3.57px;color:#f2f2f2;transform:translate(-50%,0);font-weight:bold">Quality</span><div style="left:570.60px;top:127.00px;width:131.00px;height:212.00px;background:#444;"></div><div style="left:570.60px;top:127.00px;width:131.00px;height:0.60px;background:#555;"></div><div style="left:572.00px;top:128.20px;width:118.00px;height:5.60px;background:#5d5d5d;border-radius:0.4px"></div><div style="left:574.90px;top:130.05px;width:3.00px;height:1.90px;background:#f0f0f0;clip-path:polygon(0 0,100% 0,50% 100%)"></div><span style="left:580.60px;top:126.00px;font-size:3.57px;color:#ececec;transform:none;font-weight:bold">Engine</span><span style="left:616.40px;top:133.00px;font-size:3.49px;color:#c4c4c4;transform:translate(-100%,0);">Render Engine</span><div style="left:618.00px;top:135.10px;width:45.60px;height:5.80px;background:#626262;border-radius:0.5px"></div><span style="left:619.20px;top:133.00px;font-size:3.49px;color:#e8e8e8;transform:none;">RPR 1 (Experimental)</span><span style="left:660.60px;top:133.00px;font-size:3.49px;color:#e8e8e8;transform:translate(-50%,0);">▾</span><div style="left:572.00px;top:142.20px;width:118.00px;height:5.60px;background:#5d5d5d;border-radius:0.4px"></div><div style="left:574.90px;top:144.05px;width:3.00px;height:1.90px;background:#f0f0f0;clip-path:polygon(0 0,100% 0,50% 100%)"></div><span style="left:580.60px;top:140.00px;font-size:3.57px;color:#ececec;transform:none;font-weight:bold">Final Render Quality</span><span style="left:616.40px;top:146.70px;font-size:3.49px;color:#c4c4c4;transform:translate(-100%,0);">Render Quality:</span><div style="left:618.00px;top:148.80px;width:26.00px;height:5.80px;background:#626262;border-radius:0.5px"></div><span style="left:619.20px;top:146.70px;font-size:3.49px;color:#e8e8e8;transform:none;">Full</span><span style="left:641.00px;top:146.70px;font-size:3.49px;color:#e8e8e8;transform:translate(-50%,0);">▾</span><div style="left:572.00px;top:155.60px;width:118.00px;height:5.60px;background:#5d5d5d;border-radius:0.4px"></div><div style="left:574.90px;top:157.45px;width:3.00px;height:1.90px;background:#f0f0f0;clip-path:polygon(0 0,100% 0,50% 100%)"></div><span style="left:580.60px;top:153.40px;font-size:3.57px;color:#ececec;transform:none;font-weight:bold">Final Render Ray Depths</span><span style="left:616.40px;top:160.40px;font-size:3.49px;color:#c4c4c4;transform:translate(-100%,0);">Max Ray Depth</span><div style="left:618.00px;top:162.50px;width:24.00px;height:5.80px;background:#2b2b2b;"></div><span style="left:619.20px;top:160.40px;font-size:3.49px;color:#d8d8d8;transform:none;">20</span><div style="left:643.70px;top:164.90px;width:44.60px;height:1.00px;background:#262626;"></div><div style="left:663.90px;top:163.10px;width:1.80px;height:4.60px;background:#d4d4d4;"></div><span style="left:616.40px;top:169.40px;font-size:3.49px;color:#c4c4c4;transform:translate(-100%,0);">Max Diffuse</span><div style="left:618.00px;top:171.50px;width:24.00px;height:5.80px;background:#2b2b2b;"></div><span style="left:619.20px;top:169.40px;font-size:3.49px;color:#d8d8d8;transform:none;">0</span><div style="left:643.70px;top:173.90px;width:44.60px;height:1.00px;background:#262626;"></div><div style="left:644.70px;top:172.10px;width:1.80px;height:4.60px;background:#d4d4d4;"></div><span style="left:616.40px;top:178.30px;font-size:3.49px;color:#c4c4c4;transform:translate(-100%,0);">Max Glossy</span><div style="left:618.00px;top:180.40px;width:24.00px;height:5.80px;background:#2b2b2b;"></div><span style="left:619.20px;top:178.30px;font-size:3.49px;color:#d8d8d8;transform:none;">5</span><div style="left:643.70px;top:182.80px;width:44.60px;height:1.00px;background:#262626;"></div><div style="left:646.50px;top:181.00px;width:1.80px;height:4.60px;background:#d4d4d4;"></div><span style="left:616.40px;top:187.20px;font-size:3.49px;color:#c4c4c4;transform:translate(-100%,0);">Max Refraction</span><div style="left:618.00px;top:189.30px;width:24.00px;height:5.80px;background:#2b2b2b;"></div><span style="left:619.20px;top:187.20px;font-size:3.49px;color:#d8d8d8;transform:none;">5</span><div style="left:643.70px;top:191.70px;width:44.60px;height:1.00px;background:#262626;"></div><div style="left:646.50px;top:189.90px;width:1.80px;height:4.60px;background:#d4d4d4;"></div><span style="left:616.40px;top:196.10px;font-size:3.49px;color:#c4c4c4;transform:translate(-100%,0);">Max Glossy Refraction</span><div style="left:618.00px;top:198.20px;width:24.00px;height:5.80px;background:#2b2b2b;"></div><span style="left:619.20px;top:196.10px;font-size:3.49px;color:#d8d8d8;transform:none;">5</span><div style="left:643.70px;top:200.60px;width:44.60px;height:1.00px;background:#262626;"></div><div style="left:646.50px;top:198.80px;width:1.80px;height:4.60px;background:#d4d4d4;"></div><span style="left:616.40px;top:204.70px;font-size:3.49px;color:#c4c4c4;transform:translate(-100%,0);">Max Shadow</span><div style="left:618.00px;top:206.80px;width:24.00px;height:5.80px;background:#2b2b2b;"></div><span style="left:619.20px;top:204.70px;font-size:3.49px;color:#d8d8d8;transform:none;">5</span><div style="left:643.70px;top:209.20px;width:44.60px;height:1.00px;background:#262626;"></div><div style="left:646.50px;top:207.40px;width:1.80px;height:4.60px;background:#d4d4d4;"></div><div style="left:572.00px;top:213.80px;width:118.00px;height:5.60px;background:#5d5d5d;border-radius:0.4px"></div><div style="left:574.90px;top:215.65px;width:3.00px;height:1.90px;background:#f0f0f0;clip-path:polygon(0 0,100% 0,50% 100%)"></div><span style="left:580.60px;top:211.60px;font-size:3.57px;color:#ececec;transform:none;font-weight:bold">Final Render Advanced Settings</span><span style="left:616.40px;top:218.70px;font-size:3.49px;color:#c4c4c4;transform:translate(-100%,0);">Ray Epsilon(mm)</span><div style="left:618.00px;top:220.80px;width:24.00px;height:5.80px;background:#2b2b2b;"></div><span style="left:619.20px;top:218.70px;font-size:3.49px;color:#d8d8d8;transform:none;">0.0200</span><div style="left:643.70px;top:223.20px;width:44.60px;height:1.00px;background:#262626;"></div><div style="left:644.10px;top:221.40px;width:1.80px;height:4.60px;background:#d4d4d4;"></div><div style="left:617.60px;top:230.30px;width:4.00px;height:4.00px;background:#2b2b2b;"></div><span style="left:623.20px;top:227.30px;font-size:3.49px;color:#8a8a8a;transform:none;">Enable Out of Core Textures</span><span style="left:616.40px;top:235.30px;font-size:3.49px;color:#6c6c6c;transform:translate(-100%,0);">GPU Texture Cache (MB)</span><div style="left:618.00px;top:237.40px;width:24.00px;height:5.80px;background:#3c3c3c;"></div><span style="left:619.20px;top:235.30px;font-size:3.49px;color:#666;transform:none;">512</span><div style="left:643.70px;top:239.80px;width:44.60px;height:1.00px;background:#3a3a3a;"></div><div style="left:645.10px;top:238.00px;width:1.80px;height:4.60px;background:#666;"></div><div style="left:617.60px;top:246.90px;width:4.00px;height:4.00px;background:#2b2b2b;"></div><span style="left:619.60px;top:243.90px;font-size:3.65px;color:#f0f0f0;transform:translate(-50%,0);">✓</span><span style="left:623.20px;top:243.90px;font-size:3.49px;color:#d0d0d0;transform:none;">Clamp Irradiance</span><span style="left:616.40px;top:251.90px;font-size:3.49px;color:#c4c4c4;transform:translate(-100%,0);">Clamp Irradiance Value</span><div style="left:618.00px;top:254.00px;width:24.00px;height:5.80px;background:#2b2b2b;"></div><span style="left:619.20px;top:251.90px;font-size:3.49px;color:#d8d8d8;transform:none;">1.0000</span><div style="left:643.70px;top:256.40px;width:44.60px;height:1.00px;background:#262626;"></div><div style="left:643.90px;top:254.60px;width:1.80px;height:4.60px;background:#d4d4d4;"></div><div style="left:617.60px;top:263.50px;width:4.00px;height:4.00px;background:#2b2b2b;"></div><span style="left:623.20px;top:260.50px;font-size:3.49px;color:#d0d0d0;transform:none;">Texture Compression</span><div style="left:572.00px;top:269.40px;width:118.00px;height:5.60px;background:#5d5d5d;border-radius:0.4px"></div><div style="left:574.90px;top:271.25px;width:3.00px;height:1.90px;background:#f0f0f0;clip-path:polygon(0 0,100% 0,50% 100%)"></div><span style="left:580.60px;top:267.20px;font-size:3.57px;color:#ececec;transform:none;font-weight:bold">Viewport Render Quality</span><span style="left:616.40px;top:273.60px;font-size:3.49px;color:#c4c4c4;transform:translate(-100%,0);">Render Quality:</span><div style="left:618.00px;top:275.70px;width:26.00px;height:5.80px;background:#626262;border-radius:0.5px"></div><span style="left:619.20px;top:273.60px;font-size:3.49px;color:#e8e8e8;transform:none;">Full</span><span style="left:641.00px;top:273.60px;font-size:3.49px;color:#e8e8e8;transform:translate(-50%,0);">▾</span><div style="left:572.00px;top:283.10px;width:118.00px;height:5.60px;background:#5d5d5d;border-radius:0.4px"></div><div style="left:574.90px;top:284.95px;width:3.00px;height:1.90px;background:#f0f0f0;clip-path:polygon(0 0,100% 0,50% 100%)"></div><span style="left:580.60px;top:280.90px;font-size:3.57px;color:#ececec;transform:none;font-weight:bold">Viewport Ray Depths</span><span style="left:616.40px;top:287.90px;font-size:3.49px;color:#c4c4c4;transform:translate(-100%,0);">Max Ray Depth</span><div style="left:618.00px;top:290.00px;width:24.00px;height:5.80px;background:#2b2b2b;"></div><span style="left:619.20px;top:287.90px;font-size:3.49px;color:#d8d8d8;transform:none;">8</span><div style="left:643.70px;top:292.40px;width:44.60px;height:1.00px;background:#262626;"></div><div style="left:648.90px;top:290.60px;width:1.80px;height:4.60px;background:#d4d4d4;"></div><span style="left:616.40px;top:296.50px;font-size:3.49px;color:#c4c4c4;transform:translate(-100%,0);">Max Diffuse Ray Depth</span><div style="left:618.00px;top:298.60px;width:24.00px;height:5.80px;background:#2b2b2b;"></div><span style="left:619.20px;top:296.50px;font-size:3.49px;color:#d8d8d8;transform:none;">0</span><div style="left:643.70px;top:301.00px;width:44.60px;height:1.00px;background:#262626;"></div><div style="left:644.70px;top:299.20px;width:1.80px;height:4.60px;background:#d4d4d4;"></div><span style="left:616.40px;top:305.10px;font-size:3.49px;color:#c4c4c4;transform:translate(-100%,0);">Max Reflection Ray Depth</span><div style="left:618.00px;top:307.20px;width:24.00px;height:5.80px;background:#2b2b2b;"></div><span style="left:619.20px;top:305.10px;font-size:3.49px;color:#d8d8d8;transform:none;">3</span><div style="left:643.70px;top:309.60px;width:44.60px;height:1.00px;background:#262626;"></div><div style="left:646.50px;top:307.80px;width:1.80px;height:4.60px;background:#d4d4d4;"></div><div style="left:571.70px;top:342.80px;width:129.00px;height:8.80px;background:#5d5d5d;"></div><span style="left:636.00px;top:342.30px;font-size:3.57px;color:#e4e4e4;transform:translate(-50%,0);">Close</span><div style="left:0.00px;top:391.30px;width:38.20px;height:17.00px;background:#444;"></div><div style="left:567.40px;top:391.30px;width:201.00px;height:17.00px;background:#444;"></div><div style="left:38.20px;top:402.60px;width:530.00px;height:5.70px;background:#444;"></div><div style="left:4.00px;top:391.50px;width:34.20px;height:16.20px;background:#333;"></div><div style="left:568.40px;top:391.50px;width:106.40px;height:16.20px;background:#333;"></div><div style="left:38.20px;top:402.80px;width:530.00px;height:5.00px;background:#333;"></div><div style="left:6.30px;top:392.40px;width:0.70px;height:14.60px;background:#7a7a7a;"></div><span style="left:7.50px;top:389.60px;font-size:2.82px;color:#a8a8a8;transform:none;">1</span><div style="left:14.75px;top:392.40px;width:0.70px;height:14.60px;background:#7a7a7a;"></div><span style="left:15.95px;top:389.60px;font-size:2.82px;color:#a8a8a8;transform:none;">5</span><div style="left:23.20px;top:392.40px;width:0.70px;height:14.60px;background:#7a7a7a;"></div><span style="left:24.40px;top:389.60px;font-size:2.82px;color:#a8a8a8;transform:none;">10</span><div style="left:31.65px;top:392.40px;width:0.70px;height:14.60px;background:#7a7a7a;"></div><span style="left:32.85px;top:389.60px;font-size:2.82px;color:#a8a8a8;transform:none;">15</span><div style="left:40.10px;top:403.60px;width:0.70px;height:4.00px;background:#8a8a8a;"></div><span style="left:41.30px;top:400.50px;font-size:3.07px;color:#bcbcbc;transform:none;">20</span><div style="left:48.55px;top:403.60px;width:0.70px;height:4.00px;background:#8a8a8a;"></div><span style="left:49.75px;top:400.50px;font-size:3.07px;color:#bcbcbc;transform:none;">25</span><div style="left:57.00px;top:403.60px;width:0.70px;height:4.00px;background:#8a8a8a;"></div><span style="left:58.20px;top:400.50px;font-size:3.07px;color:#bcbcbc;transform:none;">30</span><div style="left:65.45px;top:403.60px;width:0.70px;height:4.00px;background:#8a8a8a;"></div><span style="left:66.65px;top:400.50px;font-size:3.07px;color:#bcbcbc;transform:none;">35</span><div style="left:73.90px;top:403.60px;width:0.70px;height:4.00px;background:#8a8a8a;"></div><span style="left:75.10px;top:400.50px;font-size:3.07px;color:#bcbcbc;transform:none;">40</span><div style="left:82.35px;top:403.60px;width:0.70px;height:4.00px;background:#8a8a8a;"></div><span style="left:83.55px;top:400.50px;font-size:3.07px;color:#bcbcbc;transform:none;">45</span><div style="left:90.80px;top:403.60px;width:0.70px;height:4.00px;background:#8a8a8a;"></div><span style="left:92.00px;top:400.50px;font-size:3.07px;color:#bcbcbc;transform:none;">50</span><div style="left:99.25px;top:403.60px;width:0.70px;height:4.00px;background:#8a8a8a;"></div><span style="left:100.45px;top:400.50px;font-size:3.07px;color:#bcbcbc;transform:none;">55</span><div style="left:107.70px;top:403.60px;width:0.70px;height:4.00px;background:#8a8a8a;"></div><span style="left:108.90px;top:400.50px;font-size:3.07px;color:#bcbcbc;transform:none;">60</span><div style="left:116.15px;top:403.60px;width:0.70px;height:4.00px;background:#8a8a8a;"></div><span style="left:117.35px;top:400.50px;font-size:3.07px;color:#bcbcbc;transform:none;">65</span><div style="left:124.60px;top:403.60px;width:0.70px;height:4.00px;background:#8a8a8a;"></div><span style="left:125.80px;top:400.50px;font-size:3.07px;color:#bcbcbc;transform:none;">70</span><div style="left:133.05px;top:403.60px;width:0.70px;height:4.00px;background:#8a8a8a;"></div><span style="left:134.25px;top:400.50px;font-size:3.07px;color:#bcbcbc;transform:none;">75</span><div style="left:141.50px;top:403.60px;width:0.70px;height:4.00px;background:#8a8a8a;"></div><span style="left:142.70px;top:400.50px;font-size:3.07px;color:#bcbcbc;transform:none;">80</span><div style="left:149.95px;top:403.60px;width:0.70px;height:4.00px;background:#8a8a8a;"></div><span style="left:151.15px;top:400.50px;font-size:3.07px;color:#bcbcbc;transform:none;">85</span><div style="left:158.40px;top:403.60px;width:0.70px;height:4.00px;background:#8a8a8a;"></div><span style="left:159.60px;top:400.50px;font-size:3.07px;color:#bcbcbc;transform:none;">90</span><div style="left:166.85px;top:403.60px;width:0.70px;height:4.00px;background:#8a8a8a;"></div><span style="left:168.05px;top:400.50px;font-size:3.07px;color:#bcbcbc;transform:none;">95</span><div style="left:175.30px;top:403.60px;width:0.70px;height:4.00px;background:#8a8a8a;"></div><span style="left:176.50px;top:400.50px;font-size:3.07px;color:#bcbcbc;transform:none;">100</span><div style="left:183.75px;top:403.60px;width:0.70px;height:4.00px;background:#8a8a8a;"></div><span style="left:184.95px;top:400.50px;font-size:3.07px;color:#bcbcbc;transform:none;">105</span><div style="left:192.20px;top:403.60px;width:0.70px;height:4.00px;background:#8a8a8a;"></div><span style="left:193.40px;top:400.50px;font-size:3.07px;color:#bcbcbc;transform:none;">110</span><div style="left:200.65px;top:403.60px;width:0.70px;height:4.00px;background:#8a8a8a;"></div><span style="left:201.85px;top:400.50px;font-size:3.07px;color:#bcbcbc;transform:none;">115</span><div style="left:209.10px;top:403.60px;width:0.70px;height:4.00px;background:#8a8a8a;"></div><span style="left:210.30px;top:400.50px;font-size:3.07px;color:#bcbcbc;transform:none;">120</span><div style="left:217.55px;top:403.60px;width:0.70px;height:4.00px;background:#8a8a8a;"></div><span style="left:218.75px;top:400.50px;font-size:3.07px;color:#bcbcbc;transform:none;">125</span><div style="left:226.00px;top:403.60px;width:0.70px;height:4.00px;background:#8a8a8a;"></div><span style="left:227.20px;top:400.50px;font-size:3.07px;color:#bcbcbc;transform:none;">130</span><div style="left:234.45px;top:403.60px;width:0.70px;height:4.00px;background:#8a8a8a;"></div><span style="left:235.65px;top:400.50px;font-size:3.07px;color:#bcbcbc;transform:none;">135</span><div style="left:242.90px;top:403.60px;width:0.70px;height:4.00px;background:#8a8a8a;"></div><span style="left:244.10px;top:400.50px;font-size:3.07px;color:#bcbcbc;transform:none;">140</span><div style="left:251.35px;top:403.60px;width:0.70px;height:4.00px;background:#8a8a8a;"></div><span style="left:252.55px;top:400.50px;font-size:3.07px;color:#bcbcbc;transform:none;">145</span><div style="left:259.80px;top:403.60px;width:0.70px;height:4.00px;background:#8a8a8a;"></div><span style="left:261.00px;top:400.50px;font-size:3.07px;color:#bcbcbc;transform:none;">150</span><div style="left:268.25px;top:403.60px;width:0.70px;height:4.00px;background:#8a8a8a;"></div><span style="left:269.45px;top:400.50px;font-size:3.07px;color:#bcbcbc;transform:none;">155</span><div style="left:276.70px;top:403.60px;width:0.70px;height:4.00px;background:#8a8a8a;"></div><span style="left:277.90px;top:400.50px;font-size:3.07px;color:#bcbcbc;transform:none;">160</span><div style="left:285.15px;top:403.60px;width:0.70px;height:4.00px;background:#8a8a8a;"></div><span style="left:286.35px;top:400.50px;font-size:3.07px;color:#bcbcbc;transform:none;">165</span><div style="left:293.60px;top:403.60px;width:0.70px;height:4.00px;background:#8a8a8a;"></div><span style="left:294.80px;top:400.50px;font-size:3.07px;color:#bcbcbc;transform:none;">170</span><div style="left:302.05px;top:403.60px;width:0.70px;height:4.00px;background:#8a8a8a;"></div><span style="left:303.25px;top:400.50px;font-size:3.07px;color:#bcbcbc;transform:none;">175</span><div style="left:310.50px;top:403.60px;width:0.70px;height:4.00px;background:#8a8a8a;"></div><span style="left:311.70px;top:400.50px;font-size:3.07px;color:#bcbcbc;transform:none;">180</span><div style="left:318.95px;top:403.60px;width:0.70px;height:4.00px;background:#8a8a8a;"></div><span style="left:320.15px;top:400.50px;font-size:3.07px;color:#bcbcbc;transform:none;">185</span><div style="left:327.40px;top:403.60px;width:0.70px;height:4.00px;background:#8a8a8a;"></div><span style="left:328.60px;top:400.50px;font-size:3.07px;color:#bcbcbc;transform:none;">190</span><div style="left:335.85px;top:403.60px;width:0.70px;height:4.00px;background:#8a8a8a;"></div><span style="left:337.05px;top:400.50px;font-size:3.07px;color:#bcbcbc;transform:none;">195</span><div style="left:344.30px;top:403.60px;width:0.70px;height:4.00px;background:#8a8a8a;"></div><span style="left:345.50px;top:400.50px;font-size:3.07px;color:#bcbcbc;transform:none;">200</span><div style="left:352.75px;top:403.60px;width:0.70px;height:4.00px;background:#8a8a8a;"></div><span style="left:353.95px;top:400.50px;font-size:3.07px;color:#bcbcbc;transform:none;">205</span><div style="left:361.20px;top:403.60px;width:0.70px;height:4.00px;background:#8a8a8a;"></div><span style="left:362.40px;top:400.50px;font-size:3.07px;color:#bcbcbc;transform:none;">210</span><div style="left:369.65px;top:403.60px;width:0.70px;height:4.00px;background:#8a8a8a;"></div><span style="left:370.85px;top:400.50px;font-size:3.07px;color:#bcbcbc;transform:none;">215</span><div style="left:378.10px;top:403.60px;width:0.70px;height:4.00px;background:#8a8a8a;"></div><span style="left:379.30px;top:400.50px;font-size:3.07px;color:#bcbcbc;transform:none;">220</span><div style="left:386.55px;top:403.60px;width:0.70px;height:4.00px;background:#8a8a8a;"></div><span style="left:387.75px;top:400.50px;font-size:3.07px;color:#bcbcbc;transform:none;">225</span><div style="left:395.00px;top:403.60px;width:0.70px;height:4.00px;background:#8a8a8a;"></div><span style="left:396.20px;top:400.50px;font-size:3.07px;color:#bcbcbc;transform:none;">230</span><div style="left:403.45px;top:403.60px;width:0.70px;height:4.00px;background:#8a8a8a;"></div><span style="left:404.65px;top:400.50px;font-size:3.07px;color:#bcbcbc;transform:none;">235</span><div style="left:411.90px;top:403.60px;width:0.70px;height:4.00px;background:#8a8a8a;"></div><span style="left:413.10px;top:400.50px;font-size:3.07px;color:#bcbcbc;transform:none;">240</span><div style="left:420.35px;top:403.60px;width:0.70px;height:4.00px;background:#8a8a8a;"></div><span style="left:421.55px;top:400.50px;font-size:3.07px;color:#bcbcbc;transform:none;">245</span><div style="left:428.80px;top:403.60px;width:0.70px;height:4.00px;background:#8a8a8a;"></div><span style="left:430.00px;top:400.50px;font-size:3.07px;color:#bcbcbc;transform:none;">250</span><div style="left:437.25px;top:403.60px;width:0.70px;height:4.00px;background:#8a8a8a;"></div><span style="left:438.45px;top:400.50px;font-size:3.07px;color:#bcbcbc;transform:none;">255</span><div style="left:445.70px;top:403.60px;width:0.70px;height:4.00px;background:#8a8a8a;"></div><span style="left:446.90px;top:400.50px;font-size:3.07px;color:#bcbcbc;transform:none;">260</span><div style="left:454.15px;top:403.60px;width:0.70px;height:4.00px;background:#8a8a8a;"></div><span style="left:455.35px;top:400.50px;font-size:3.07px;color:#bcbcbc;transform:none;">265</span><div style="left:462.60px;top:403.60px;width:0.70px;height:4.00px;background:#8a8a8a;"></div><span style="left:463.80px;top:400.50px;font-size:3.07px;color:#bcbcbc;transform:none;">270</span><div style="left:471.05px;top:403.60px;width:0.70px;height:4.00px;background:#8a8a8a;"></div><span style="left:472.25px;top:400.50px;font-size:3.07px;color:#bcbcbc;transform:none;">275</span><div style="left:479.50px;top:403.60px;width:0.70px;height:4.00px;background:#8a8a8a;"></div><span style="left:480.70px;top:400.50px;font-size:3.07px;color:#bcbcbc;transform:none;">280</span><div style="left:487.95px;top:403.60px;width:0.70px;height:4.00px;background:#8a8a8a;"></div><span style="left:489.15px;top:400.50px;font-size:3.07px;color:#bcbcbc;transform:none;">285</span><div style="left:496.40px;top:403.60px;width:0.70px;height:4.00px;background:#8a8a8a;"></div><span style="left:497.60px;top:400.50px;font-size:3.07px;color:#bcbcbc;transform:none;">290</span><div style="left:504.85px;top:403.60px;width:0.70px;height:4.00px;background:#8a8a8a;"></div><span style="left:506.05px;top:400.50px;font-size:3.07px;color:#bcbcbc;transform:none;">295</span><div style="left:513.30px;top:403.60px;width:0.70px;height:4.00px;background:#8a8a8a;"></div><span style="left:514.50px;top:400.50px;font-size:3.07px;color:#bcbcbc;transform:none;">300</span><div style="left:521.75px;top:403.60px;width:0.70px;height:4.00px;background:#8a8a8a;"></div><span style="left:522.95px;top:400.50px;font-size:3.07px;color:#bcbcbc;transform:none;">305</span><div style="left:530.20px;top:403.60px;width:0.70px;height:4.00px;background:#8a8a8a;"></div><span style="left:531.40px;top:400.50px;font-size:3.07px;color:#bcbcbc;transform:none;">310</span><div style="left:538.65px;top:403.60px;width:0.70px;height:4.00px;background:#8a8a8a;"></div><span style="left:539.85px;top:400.50px;font-size:3.07px;color:#bcbcbc;transform:none;">315</span><div style="left:547.10px;top:403.60px;width:0.70px;height:4.00px;background:#8a8a8a;"></div><span style="left:548.30px;top:400.50px;font-size:3.07px;color:#bcbcbc;transform:none;">320</span><div style="left:555.55px;top:403.60px;width:0.70px;height:4.00px;background:#8a8a8a;"></div><span style="left:556.75px;top:400.50px;font-size:3.07px;color:#bcbcbc;transform:none;">325</span><div style="left:564.00px;top:403.60px;width:0.70px;height:4.00px;background:#8a8a8a;"></div><span style="left:565.20px;top:400.50px;font-size:3.07px;color:#bcbcbc;transform:none;">330</span><div style="left:572.45px;top:392.40px;width:0.70px;height:14.60px;background:#7a7a7a;"></div><span style="left:573.65px;top:389.60px;font-size:2.82px;color:#a8a8a8;transform:none;">335</span><div style="left:580.90px;top:392.40px;width:0.70px;height:14.60px;background:#7a7a7a;"></div><span style="left:582.10px;top:389.60px;font-size:2.82px;color:#a8a8a8;transform:none;">340</span><div style="left:589.35px;top:392.40px;width:0.70px;height:14.60px;background:#7a7a7a;"></div><span style="left:590.55px;top:389.60px;font-size:2.82px;color:#a8a8a8;transform:none;">345</span><div style="left:597.80px;top:392.40px;width:0.70px;height:14.60px;background:#7a7a7a;"></div><span style="left:599.00px;top:389.60px;font-size:2.82px;color:#a8a8a8;transform:none;">350</span><div style="left:606.25px;top:392.40px;width:0.70px;height:14.60px;background:#7a7a7a;"></div><span style="left:607.45px;top:389.60px;font-size:2.82px;color:#a8a8a8;transform:none;">355</span><div style="left:614.70px;top:392.40px;width:0.70px;height:14.60px;background:#7a7a7a;"></div><span style="left:615.90px;top:389.60px;font-size:2.82px;color:#a8a8a8;transform:none;">360</span><div style="left:623.15px;top:392.40px;width:0.70px;height:14.60px;background:#7a7a7a;"></div><span style="left:624.35px;top:389.60px;font-size:2.82px;color:#a8a8a8;transform:none;">365</span><div style="left:631.60px;top:392.40px;width:0.70px;height:14.60px;background:#7a7a7a;"></div><span style="left:632.80px;top:389.60px;font-size:2.82px;color:#a8a8a8;transform:none;">370</span><div style="left:640.05px;top:392.40px;width:0.70px;height:14.60px;background:#7a7a7a;"></div><span style="left:641.25px;top:389.60px;font-size:2.82px;color:#a8a8a8;transform:none;">375</span><div style="left:648.50px;top:392.40px;width:0.70px;height:14.60px;background:#7a7a7a;"></div><span style="left:649.70px;top:389.60px;font-size:2.82px;color:#a8a8a8;transform:none;">380</span><div style="left:656.95px;top:392.40px;width:0.70px;height:14.60px;background:#7a7a7a;"></div><span style="left:658.15px;top:389.60px;font-size:2.82px;color:#a8a8a8;transform:none;">385</span><div style="left:665.40px;top:392.40px;width:0.70px;height:14.60px;background:#7a7a7a;"></div><span style="left:666.60px;top:389.60px;font-size:2.82px;color:#a8a8a8;transform:none;">390</span><div style="left:673.85px;top:392.40px;width:0.70px;height:14.60px;background:#7a7a7a;"></div><span style="left:675.05px;top:389.60px;font-size:2.82px;color:#a8a8a8;transform:none;">395</span><div style="left:6.00px;top:391.50px;width:1.60px;height:16.20px;background:#8a8a8a;"></div><span style="left:1.60px;top:377.50px;font-size:15.09px;font-weight:bold;color:#25aeb6;transform-origin:0 50%;transform:scaleX(0.9)">M</span><span style="left:18.60px;top:379.40px;font-size:2.49px;color:#bbb;transform:translate(-50%,0);">▾</span><span style="left:20.40px;top:379.40px;font-size:2.49px;color:#7c7c7c;transform:none;">AUTODESK</span><div style="left:677.40px;top:392.40px;width:27.60px;height:6.00px;background:#2b2b2b;"></div><span style="left:679.00px;top:390.40px;font-size:3.32px;color:#d0d0d0;transform:none;">1</span><div style="left:710.20px;top:394.30px;width:2.80px;height:3.80px;background:#dcdcdc;clip-path:polygon(100% 0,0 50%,100% 100%)"></div><div style="left:709.10px;top:394.30px;width:0.80px;height:3.80px;background:#dcdcdc;"></div><div style="left:717.70px;top:394.30px;width:2.80px;height:3.80px;background:#dcdcdc;clip-path:polygon(100% 0,0 50%,100% 100%)"></div><div style="left:716.60px;top:394.30px;width:0.80px;height:3.80px;background:#dcdcdc;"></div><div style="left:725.20px;top:394.30px;width:2.80px;height:3.80px;background:#e0b090;clip-path:polygon(100% 0,0 50%,100% 100%)"></div><div style="left:724.10px;top:394.30px;width:0.80px;height:3.80px;background:#dcdcdc;"></div><div style="left:732.20px;top:393.90px;width:3.60px;height:4.60px;background:#e8e8e8;clip-path:polygon(100% 0,0 50%,100% 100%)"></div><div style="left:740.20px;top:393.90px;width:3.60px;height:4.60px;background:#e8e8e8;clip-path:polygon(0 0,100% 50%,0 100%)"></div><div style="left:747.80px;top:394.30px;width:2.80px;height:3.80px;background:#dcdcdc;clip-path:polygon(0 0,100% 50%,0 100%)"></div><div style="left:750.90px;top:394.30px;width:0.80px;height:3.80px;background:#dcdcdc;"></div><div style="left:755.30px;top:394.30px;width:2.80px;height:3.80px;background:#dcdcdc;clip-path:polygon(0 0,100% 50%,0 100%)"></div><div style="left:758.40px;top:394.30px;width:0.80px;height:3.80px;background:#dcdcdc;"></div><div style="left:761.80px;top:394.30px;width:2.80px;height:3.80px;background:#dcdcdc;clip-path:polygon(0 0,100% 50%,0 100%)"></div><div style="left:764.90px;top:394.30px;width:0.80px;height:3.80px;background:#dcdcdc;"></div><div style="left:0.00px;top:408.30px;width:768.00px;height:12.60px;background:#444;"></div><div style="left:5.00px;top:410.90px;width:26.50px;height:7.60px;background:#2b2b2b;"></div><span style="left:6.40px;top:409.70px;font-size:3.32px;color:#d0d0d0;transform:none;">1</span><div style="left:35.00px;top:410.90px;width:27.00px;height:7.60px;background:#2b2b2b;"></div><span style="left:36.40px;top:409.70px;font-size:3.32px;color:#d0d0d0;transform:none;">1</span><div style="left:66.60px;top:411.20px;width:449.00px;height:7.00px;background:#5e5e5e;border-radius:0.5px"></div><div style="left:68.40px;top:412.00px;width:4.60px;height:5.40px;background:#bdbdbd;border-radius:0.4px"></div><span style="left:74.00px;top:409.70px;font-size:3.15px;color:#ddd;transform:none;">1</span><div style="left:509.60px;top:412.00px;width:4.60px;height:5.40px;background:#bdbdbd;border-radius:0.4px"></div><span style="left:508.40px;top:409.70px;font-size:3.15px;color:#ddd;transform:translate(-100%,0);">150</span><div style="left:519.50px;top:410.90px;width:25.00px;height:7.60px;background:#2b2b2b;"></div><span style="left:521.00px;top:409.70px;font-size:3.32px;color:#d0d0d0;transform:none;">150</span><div style="left:549.50px;top:410.90px;width:28.50px;height:7.60px;background:#2b2b2b;"></div><span style="left:551.00px;top:409.70px;font-size:3.32px;color:#d0d0d0;transform:none;">150</span><div style="left:583.00px;top:410.60px;width:5.60px;height:8.00px;background:transparent;border:0.6px solid #4fa05a;box-sizing:border-box"></div><div style="left:584.50px;top:412.10px;width:2.60px;height:5.00px;background:#e0703a;"></div><span style="left:592.50px;top:409.70px;font-size:3.32px;color:#888;transform:translate(-50%,0);">|</span><span style="left:599.00px;top:409.70px;font-size:2.82px;color:#aaa;transform:translate(-50%,0);">▾</span><span style="left:604.30px;top:409.70px;font-size:3.49px;color:#d0d0d0;transform:none;">No Character Set</span><span style="left:639.00px;top:409.70px;font-size:2.82px;color:#aaa;transform:translate(-50%,0);">▾</span><span style="left:645.70px;top:409.70px;font-size:3.49px;color:#d0d0d0;transform:none;">No Anim Layer</span><div style="left:676.35px;top:411.40px;width:0.60px;height:6.60px;background:#666;"></div><div style="left:683.50px;top:411.40px;width:30.00px;height:6.60px;background:#626262;border-radius:0.5px"></div><span style="left:685.00px;top:409.70px;font-size:3.49px;color:#e8e8e8;transform:none;">30 fps</span><span style="left:710.30px;top:409.70px;font-size:3.49px;color:#e8e8e8;transform:translate(-50%,0);">▾</span><div style="left:717.60px;top:413.00px;width:5.00px;height:3.00px;background:transparent;border:0.8px solid #d8d8d8;border-radius:1.4px;box-sizing:border-box"></div><div style="left:726.70px;top:412.70px;width:4.60px;height:3.80px;background:#d8906a;"></div><div style="left:728.80px;top:412.60px;width:2.00px;height:2.00px;background:#e0e0e0;"></div><div style="left:739.00px;top:410.60px;width:7.20px;height:8.00px;background:transparent;border:0.6px solid #4fa05a;box-sizing:border-box"></div><div style="left:740.90px;top:412.60px;width:3.40px;height:4.00px;background:#e0e0e0;clip-path:polygon(100% 0,0 50%,100% 100%)"></div><div style="left:749.60px;top:412.40px;width:4.40px;height:4.40px;background:transparent;border:0.7px solid #d8804a;box-sizing:border-box"></div><div style="left:758.80px;top:414.15px;width:4.40px;height:0.90px;background:#e07a3a;transform:rotate(40deg)"></div><div style="left:758.80px;top:414.15px;width:4.40px;height:0.90px;background:#e07a3a;transform:rotate(-40deg)"></div><div style="left:0.00px;top:420.90px;width:768.00px;height:10.20px;background:#444;"></div><span style="left:8.00px;top:421.00px;font-size:3.49px;color:#e0e0e0;transform:translate(-50%,0);font-weight:bold">MEL</span><div style="left:19.00px;top:422.40px;width:269.00px;height:7.00px;background:#2b2b2b;"></div><div style="left:290.00px;top:422.40px;width:467.50px;height:7.00px;background:#2b2b2b;"></div><div style="left:759.80px;top:423.00px;width:5.40px;height:5.40px;background:#d8d8d8;border-radius:0.5px"></div><div style="left:760.80px;top:425.30px;width:3.40px;height:0.80px;background:#666;"></div><div style="left:0.00px;top:431.10px;width:768.00px;height:7.90px;background:#444;"></div><div style="left:0.00px;top:431.10px;width:768.00px;height:0.50px;background:#3a3a3a;"></div><span style="left:6.00px;top:430.60px;font-size:3.4px;color:#c8c8c8;transform:none;">No help available for this tool</span></div></body></html>
